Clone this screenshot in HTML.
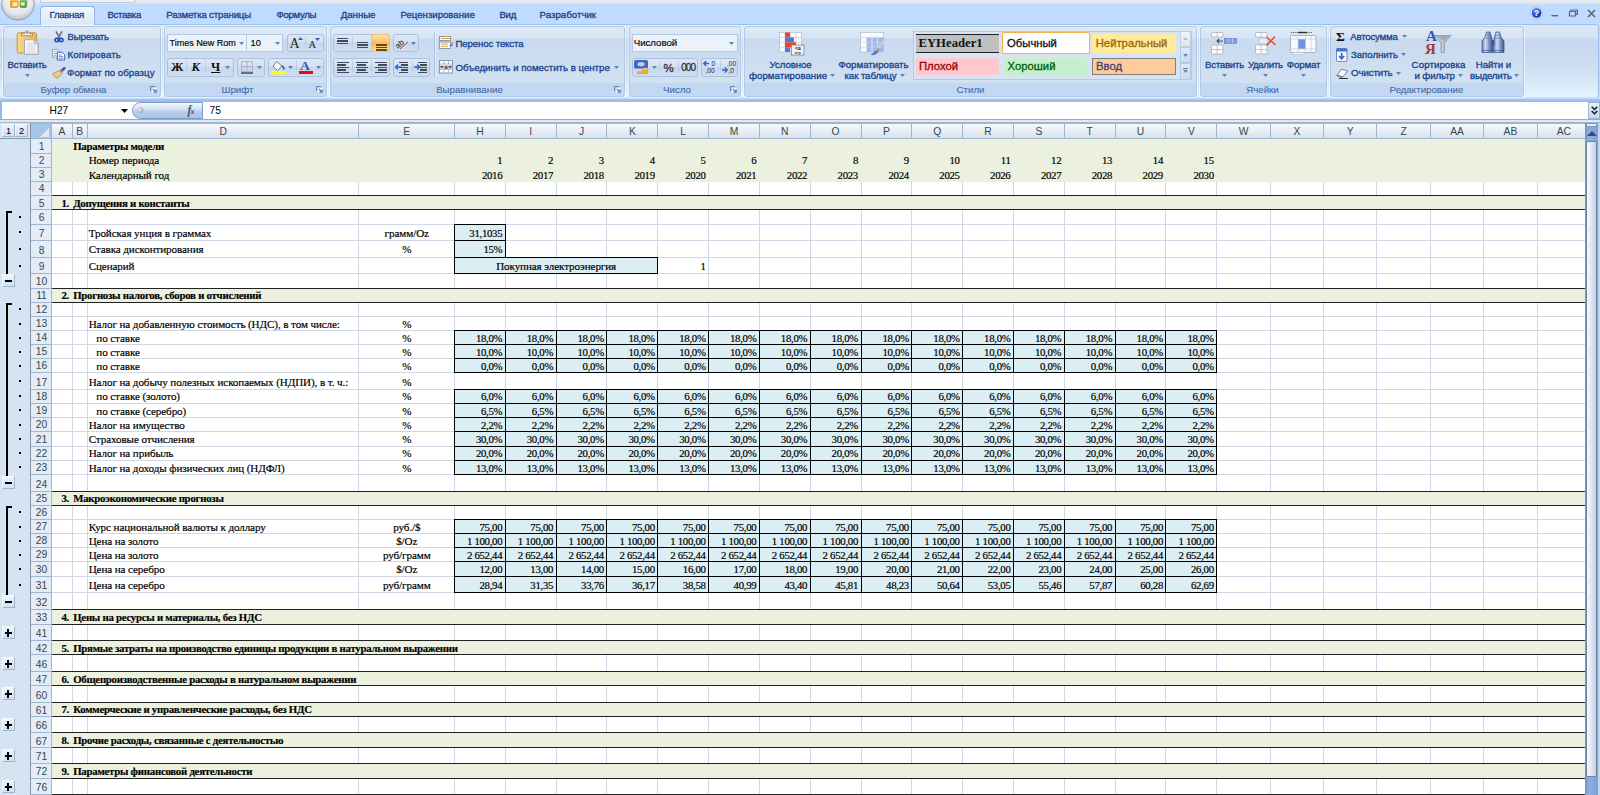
<!DOCTYPE html>
<html lang="ru"><head><meta charset="utf-8"><title>Excel</title>
<style>
html,body{margin:0;padding:0;}
body{width:1600px;height:795px;overflow:hidden;position:relative;background:#fff;font-family:"Liberation Sans",sans-serif;}
div,span{position:absolute;box-sizing:border-box;white-space:nowrap;}
svg{position:absolute;overflow:visible;}
.t{font-family:"Liberation Serif",serif;font-size:11.1px;line-height:12px;height:12px;color:#000;letter-spacing:-0.1px;-webkit-text-stroke:0.18px #000;}
.n{font-family:"Liberation Serif",serif;font-size:10.8px;line-height:12px;height:12px;color:#000;text-align:right;letter-spacing:-0.3px;-webkit-text-stroke:0.18px #000;}
.b{font-weight:bold;font-size:10.8px;letter-spacing:-0.25px;}
.c{text-align:center;}
.rh{font-size:10.3px;line-height:14px;color:#34484a;text-align:center;left:31px;width:21px;}
.ch{font-size:10.3px;line-height:14px;color:#34484a;text-align:center;top:124.5px;height:14px;}
.rt{font-size:9.7px;color:#15428b;line-height:12px;-webkit-text-stroke:0.3px currentColor;}
.gl{background:#d0d7e5;}
.inp{background:#dbeef4;border:1px solid #000;}
</style></head><body>

<div style="left:52px;top:139px;width:1533px;height:656px;background:#fff;"></div>
<div class="gl" style="left:72px;top:139px;width:1px;height:656px;"></div>
<div class="gl" style="left:87px;top:139px;width:1px;height:656px;"></div>
<div class="gl" style="left:358px;top:139px;width:1px;height:656px;"></div>
<div class="gl" style="left:454px;top:139px;width:1px;height:656px;"></div>
<div class="gl" style="left:505px;top:139px;width:1px;height:656px;"></div>
<div class="gl" style="left:556px;top:139px;width:1px;height:656px;"></div>
<div class="gl" style="left:606px;top:139px;width:1px;height:656px;"></div>
<div class="gl" style="left:657px;top:139px;width:1px;height:656px;"></div>
<div class="gl" style="left:708px;top:139px;width:1px;height:656px;"></div>
<div class="gl" style="left:759px;top:139px;width:1px;height:656px;"></div>
<div class="gl" style="left:810px;top:139px;width:1px;height:656px;"></div>
<div class="gl" style="left:861px;top:139px;width:1px;height:656px;"></div>
<div class="gl" style="left:911px;top:139px;width:1px;height:656px;"></div>
<div class="gl" style="left:962px;top:139px;width:1px;height:656px;"></div>
<div class="gl" style="left:1013px;top:139px;width:1px;height:656px;"></div>
<div class="gl" style="left:1064px;top:139px;width:1px;height:656px;"></div>
<div class="gl" style="left:1115px;top:139px;width:1px;height:656px;"></div>
<div class="gl" style="left:1165px;top:139px;width:1px;height:656px;"></div>
<div class="gl" style="left:1216px;top:139px;width:1px;height:656px;"></div>
<div class="gl" style="left:1270px;top:139px;width:1px;height:656px;"></div>
<div class="gl" style="left:1323px;top:139px;width:1px;height:656px;"></div>
<div class="gl" style="left:1376px;top:139px;width:1px;height:656px;"></div>
<div class="gl" style="left:1430px;top:139px;width:1px;height:656px;"></div>
<div class="gl" style="left:1483px;top:139px;width:1px;height:656px;"></div>
<div class="gl" style="left:1537px;top:139px;width:1px;height:656px;"></div>
<div class="gl" style="left:52px;top:153px;width:1533px;height:1px;"></div>
<div class="gl" style="left:52px;top:167px;width:1533px;height:1px;"></div>
<div class="gl" style="left:52px;top:181px;width:1533px;height:1px;"></div>
<div class="gl" style="left:52px;top:195px;width:1533px;height:1px;"></div>
<div class="gl" style="left:52px;top:209px;width:1533px;height:1px;"></div>
<div class="gl" style="left:52px;top:224px;width:1533px;height:1px;"></div>
<div class="gl" style="left:52px;top:240px;width:1533px;height:1px;"></div>
<div class="gl" style="left:52px;top:257px;width:1533px;height:1px;"></div>
<div class="gl" style="left:52px;top:273px;width:1533px;height:1px;"></div>
<div class="gl" style="left:52px;top:288px;width:1533px;height:1px;"></div>
<div class="gl" style="left:52px;top:302px;width:1533px;height:1px;"></div>
<div class="gl" style="left:52px;top:316px;width:1533px;height:1px;"></div>
<div class="gl" style="left:52px;top:330px;width:1533px;height:1px;"></div>
<div class="gl" style="left:52px;top:344px;width:1533px;height:1px;"></div>
<div class="gl" style="left:52px;top:358px;width:1533px;height:1px;"></div>
<div class="gl" style="left:52px;top:372px;width:1533px;height:1px;"></div>
<div class="gl" style="left:52px;top:389px;width:1533px;height:1px;"></div>
<div class="gl" style="left:52px;top:403px;width:1533px;height:1px;"></div>
<div class="gl" style="left:52px;top:417px;width:1533px;height:1px;"></div>
<div class="gl" style="left:52px;top:431px;width:1533px;height:1px;"></div>
<div class="gl" style="left:52px;top:446px;width:1533px;height:1px;"></div>
<div class="gl" style="left:52px;top:460px;width:1533px;height:1px;"></div>
<div class="gl" style="left:52px;top:474px;width:1533px;height:1px;"></div>
<div class="gl" style="left:52px;top:491px;width:1533px;height:1px;"></div>
<div class="gl" style="left:52px;top:505px;width:1533px;height:1px;"></div>
<div class="gl" style="left:52px;top:519px;width:1533px;height:1px;"></div>
<div class="gl" style="left:52px;top:533px;width:1533px;height:1px;"></div>
<div class="gl" style="left:52px;top:547px;width:1533px;height:1px;"></div>
<div class="gl" style="left:52px;top:561px;width:1533px;height:1px;"></div>
<div class="gl" style="left:52px;top:576px;width:1533px;height:1px;"></div>
<div class="gl" style="left:52px;top:592px;width:1533px;height:1px;"></div>
<div class="gl" style="left:52px;top:609px;width:1533px;height:1px;"></div>
<div class="gl" style="left:52px;top:624px;width:1533px;height:1px;"></div>
<div class="gl" style="left:52px;top:640px;width:1533px;height:1px;"></div>
<div class="gl" style="left:52px;top:654px;width:1533px;height:1px;"></div>
<div class="gl" style="left:52px;top:671px;width:1533px;height:1px;"></div>
<div class="gl" style="left:52px;top:685px;width:1533px;height:1px;"></div>
<div class="gl" style="left:52px;top:702px;width:1533px;height:1px;"></div>
<div class="gl" style="left:52px;top:716px;width:1533px;height:1px;"></div>
<div class="gl" style="left:52px;top:732px;width:1533px;height:1px;"></div>
<div class="gl" style="left:52px;top:747px;width:1533px;height:1px;"></div>
<div class="gl" style="left:52px;top:763px;width:1533px;height:1px;"></div>
<div class="gl" style="left:52px;top:778px;width:1533px;height:1px;"></div>
<div class="gl" style="left:52px;top:794px;width:1533px;height:1px;"></div>
<div style="left:52px;top:139px;width:1533px;height:43px;background:#ebf1de;"></div>
<div style="left:52px;top:195px;width:1533px;height:15px;background:#ebf1de;border-top:1px solid #222;border-bottom:1px solid #222;"></div>
<div style="left:52px;top:288px;width:1533px;height:15px;background:#ebf1de;border-top:1px solid #222;border-bottom:1px solid #222;"></div>
<div style="left:52px;top:491px;width:1533px;height:15px;background:#ebf1de;border-top:1px solid #222;border-bottom:1px solid #222;"></div>
<div style="left:52px;top:609px;width:1533px;height:16px;background:#ebf1de;border-top:1px solid #222;border-bottom:1px solid #222;"></div>
<div style="left:52px;top:640px;width:1533px;height:15px;background:#ebf1de;border-top:1px solid #222;border-bottom:1px solid #222;"></div>
<div style="left:52px;top:671px;width:1533px;height:15px;background:#ebf1de;border-top:1px solid #222;border-bottom:1px solid #222;"></div>
<div style="left:52px;top:702px;width:1533px;height:15px;background:#ebf1de;border-top:1px solid #222;border-bottom:1px solid #222;"></div>
<div style="left:52px;top:732px;width:1533px;height:16px;background:#ebf1de;border-top:1px solid #222;border-bottom:1px solid #222;"></div>
<div style="left:52px;top:763px;width:1533px;height:16px;background:#ebf1de;border-top:1px solid #222;border-bottom:1px solid #222;"></div>
<div style="left:52px;top:794px;width:1533px;height:1px;background:#222;"></div>
<div class="t b" style="left:73.2px;top:140.0px;">Параметры модели</div>
<div class="t" style="left:88.7px;top:154.0px;">Номер периода</div>
<div class="t" style="left:88.7px;top:168.5px;">Календарный год</div>
<div class="n" style="left:454.5px;width:47.8px;top:154.0px;text-align:right;">1</div>
<div class="n" style="left:454.5px;width:47.8px;top:168.5px;text-align:right;">2016</div>
<div class="n" style="left:505.3px;width:47.8px;top:154.0px;text-align:right;">2</div>
<div class="n" style="left:505.3px;width:47.8px;top:168.5px;text-align:right;">2017</div>
<div class="n" style="left:556.1px;width:47.8px;top:154.0px;text-align:right;">3</div>
<div class="n" style="left:556.1px;width:47.8px;top:168.5px;text-align:right;">2018</div>
<div class="n" style="left:607.0px;width:47.8px;top:154.0px;text-align:right;">4</div>
<div class="n" style="left:607.0px;width:47.8px;top:168.5px;text-align:right;">2019</div>
<div class="n" style="left:657.8px;width:47.8px;top:154.0px;text-align:right;">5</div>
<div class="n" style="left:657.8px;width:47.8px;top:168.5px;text-align:right;">2020</div>
<div class="n" style="left:708.6px;width:47.8px;top:154.0px;text-align:right;">6</div>
<div class="n" style="left:708.6px;width:47.8px;top:168.5px;text-align:right;">2021</div>
<div class="n" style="left:759.4px;width:47.8px;top:154.0px;text-align:right;">7</div>
<div class="n" style="left:759.4px;width:47.8px;top:168.5px;text-align:right;">2022</div>
<div class="n" style="left:810.2px;width:47.8px;top:154.0px;text-align:right;">8</div>
<div class="n" style="left:810.2px;width:47.8px;top:168.5px;text-align:right;">2023</div>
<div class="n" style="left:861.1px;width:47.8px;top:154.0px;text-align:right;">9</div>
<div class="n" style="left:861.1px;width:47.8px;top:168.5px;text-align:right;">2024</div>
<div class="n" style="left:911.9px;width:47.8px;top:154.0px;text-align:right;">10</div>
<div class="n" style="left:911.9px;width:47.8px;top:168.5px;text-align:right;">2025</div>
<div class="n" style="left:962.7px;width:47.8px;top:154.0px;text-align:right;">11</div>
<div class="n" style="left:962.7px;width:47.8px;top:168.5px;text-align:right;">2026</div>
<div class="n" style="left:1013.5px;width:47.8px;top:154.0px;text-align:right;">12</div>
<div class="n" style="left:1013.5px;width:47.8px;top:168.5px;text-align:right;">2027</div>
<div class="n" style="left:1064.3px;width:47.8px;top:154.0px;text-align:right;">13</div>
<div class="n" style="left:1064.3px;width:47.8px;top:168.5px;text-align:right;">2028</div>
<div class="n" style="left:1115.2px;width:47.8px;top:154.0px;text-align:right;">14</div>
<div class="n" style="left:1115.2px;width:47.8px;top:168.5px;text-align:right;">2029</div>
<div class="n" style="left:1166.0px;width:47.8px;top:154.0px;text-align:right;">15</div>
<div class="n" style="left:1166.0px;width:47.8px;top:168.5px;text-align:right;">2030</div>
<div class="t b" style="left:52.0px;width:17.0px;top:196.5px;text-align:right;">1.</div>
<div class="t b" style="left:73.2px;top:196.5px;">Допущения и константы</div>
<div class="t b" style="left:52.0px;width:17.0px;top:289.0px;text-align:right;">2.</div>
<div class="t b" style="left:73.2px;top:289.0px;">Прогнозы налогов, сборов и отчислений</div>
<div class="t b" style="left:52.0px;width:17.0px;top:492.0px;text-align:right;">3.</div>
<div class="t b" style="left:73.2px;top:492.0px;">Макроэкономические прогнозы</div>
<div class="t b" style="left:52.0px;width:17.0px;top:610.5px;text-align:right;">4.</div>
<div class="t b" style="left:73.2px;top:610.5px;">Цены на ресурсы и материалы, без НДС</div>
<div class="t b" style="left:52.0px;width:17.0px;top:641.5px;text-align:right;">5.</div>
<div class="t b" style="left:73.2px;top:641.5px;">Прямые затраты на производство единицы продукции в натуральном выражении</div>
<div class="t b" style="left:52.0px;width:17.0px;top:672.5px;text-align:right;">6.</div>
<div class="t b" style="left:73.2px;top:672.5px;">Общепроизводственные расходы в натуральном выражении</div>
<div class="t b" style="left:52.0px;width:17.0px;top:703.0px;text-align:right;">7.</div>
<div class="t b" style="left:73.2px;top:703.0px;">Коммерческие и управленческие расходы, без НДС</div>
<div class="t b" style="left:52.0px;width:17.0px;top:734.0px;text-align:right;">8.</div>
<div class="t b" style="left:73.2px;top:734.0px;">Прочие расходы, связанные с деятельностью</div>
<div class="t b" style="left:52.0px;width:17.0px;top:765.0px;text-align:right;">9.</div>
<div class="t b" style="left:73.2px;top:765.0px;">Параметры финансовой деятельности</div>
<div class="t" style="left:88.7px;top:226.5px;">Тройская унция в граммах</div>
<div class="t" style="left:359.0px;width:95.5px;top:226.5px;text-align:center;">грамм/Oz</div>
<div class="t" style="left:88.7px;top:243.0px;">Ставка дисконтирования</div>
<div class="t" style="left:359.0px;width:95.5px;top:243.0px;text-align:center;">%</div>
<div class="t" style="left:88.7px;top:259.5px;">Сценарий</div>
<div class="inp" style="left:454px;top:224px;width:52px;height:17px;"></div>
<div class="inp" style="left:454px;top:240px;width:52px;height:18px;"></div>
<div class="inp" style="left:454px;top:257px;width:204px;height:17px;"></div>
<div class="n" style="left:454.5px;width:47.8px;top:226.5px;text-align:right;">31,1035</div>
<div class="n" style="left:454.5px;width:47.8px;top:243.0px;text-align:right;">15%</div>
<div class="t" style="left:454.5px;width:203.3px;top:259.5px;text-align:center;">Покупная электроэнергия</div>
<div class="n" style="left:657.8px;width:47.8px;top:259.5px;text-align:right;">1</div>
<div class="t" style="left:88.7px;top:317.5px;">Налог на добавленную стоимость (НДС), в том числе:</div>
<div class="t" style="left:359.0px;width:95.5px;top:317.5px;text-align:center;">%</div>
<div class="t" style="left:96.3px;top:331.5px;">по ставке</div>
<div class="t" style="left:359.0px;width:95.5px;top:331.5px;text-align:center;">%</div>
<div class="inp" style="left:454px;top:330px;width:52px;height:15px;"></div>
<div class="n" style="left:454.5px;width:47.8px;top:331.5px;text-align:right;">18,0%</div>
<div class="inp" style="left:505px;top:330px;width:52px;height:15px;"></div>
<div class="n" style="left:505.3px;width:47.8px;top:331.5px;text-align:right;">18,0%</div>
<div class="inp" style="left:556px;top:330px;width:51px;height:15px;"></div>
<div class="n" style="left:556.1px;width:47.8px;top:331.5px;text-align:right;">18,0%</div>
<div class="inp" style="left:606px;top:330px;width:52px;height:15px;"></div>
<div class="n" style="left:607.0px;width:47.8px;top:331.5px;text-align:right;">18,0%</div>
<div class="inp" style="left:657px;top:330px;width:52px;height:15px;"></div>
<div class="n" style="left:657.8px;width:47.8px;top:331.5px;text-align:right;">18,0%</div>
<div class="inp" style="left:708px;top:330px;width:52px;height:15px;"></div>
<div class="n" style="left:708.6px;width:47.8px;top:331.5px;text-align:right;">18,0%</div>
<div class="inp" style="left:759px;top:330px;width:52px;height:15px;"></div>
<div class="n" style="left:759.4px;width:47.8px;top:331.5px;text-align:right;">18,0%</div>
<div class="inp" style="left:810px;top:330px;width:52px;height:15px;"></div>
<div class="n" style="left:810.2px;width:47.8px;top:331.5px;text-align:right;">18,0%</div>
<div class="inp" style="left:861px;top:330px;width:51px;height:15px;"></div>
<div class="n" style="left:861.1px;width:47.8px;top:331.5px;text-align:right;">18,0%</div>
<div class="inp" style="left:911px;top:330px;width:52px;height:15px;"></div>
<div class="n" style="left:911.9px;width:47.8px;top:331.5px;text-align:right;">18,0%</div>
<div class="inp" style="left:962px;top:330px;width:52px;height:15px;"></div>
<div class="n" style="left:962.7px;width:47.8px;top:331.5px;text-align:right;">18,0%</div>
<div class="inp" style="left:1013px;top:330px;width:52px;height:15px;"></div>
<div class="n" style="left:1013.5px;width:47.8px;top:331.5px;text-align:right;">18,0%</div>
<div class="inp" style="left:1064px;top:330px;width:52px;height:15px;"></div>
<div class="n" style="left:1064.3px;width:47.8px;top:331.5px;text-align:right;">18,0%</div>
<div class="inp" style="left:1115px;top:330px;width:51px;height:15px;"></div>
<div class="n" style="left:1115.2px;width:47.8px;top:331.5px;text-align:right;">18,0%</div>
<div class="inp" style="left:1165px;top:330px;width:52px;height:15px;"></div>
<div class="n" style="left:1166.0px;width:47.8px;top:331.5px;text-align:right;">18,0%</div>
<div class="t" style="left:96.3px;top:345.5px;">по ставке</div>
<div class="t" style="left:359.0px;width:95.5px;top:345.5px;text-align:center;">%</div>
<div class="inp" style="left:454px;top:344px;width:52px;height:15px;"></div>
<div class="n" style="left:454.5px;width:47.8px;top:345.5px;text-align:right;">10,0%</div>
<div class="inp" style="left:505px;top:344px;width:52px;height:15px;"></div>
<div class="n" style="left:505.3px;width:47.8px;top:345.5px;text-align:right;">10,0%</div>
<div class="inp" style="left:556px;top:344px;width:51px;height:15px;"></div>
<div class="n" style="left:556.1px;width:47.8px;top:345.5px;text-align:right;">10,0%</div>
<div class="inp" style="left:606px;top:344px;width:52px;height:15px;"></div>
<div class="n" style="left:607.0px;width:47.8px;top:345.5px;text-align:right;">10,0%</div>
<div class="inp" style="left:657px;top:344px;width:52px;height:15px;"></div>
<div class="n" style="left:657.8px;width:47.8px;top:345.5px;text-align:right;">10,0%</div>
<div class="inp" style="left:708px;top:344px;width:52px;height:15px;"></div>
<div class="n" style="left:708.6px;width:47.8px;top:345.5px;text-align:right;">10,0%</div>
<div class="inp" style="left:759px;top:344px;width:52px;height:15px;"></div>
<div class="n" style="left:759.4px;width:47.8px;top:345.5px;text-align:right;">10,0%</div>
<div class="inp" style="left:810px;top:344px;width:52px;height:15px;"></div>
<div class="n" style="left:810.2px;width:47.8px;top:345.5px;text-align:right;">10,0%</div>
<div class="inp" style="left:861px;top:344px;width:51px;height:15px;"></div>
<div class="n" style="left:861.1px;width:47.8px;top:345.5px;text-align:right;">10,0%</div>
<div class="inp" style="left:911px;top:344px;width:52px;height:15px;"></div>
<div class="n" style="left:911.9px;width:47.8px;top:345.5px;text-align:right;">10,0%</div>
<div class="inp" style="left:962px;top:344px;width:52px;height:15px;"></div>
<div class="n" style="left:962.7px;width:47.8px;top:345.5px;text-align:right;">10,0%</div>
<div class="inp" style="left:1013px;top:344px;width:52px;height:15px;"></div>
<div class="n" style="left:1013.5px;width:47.8px;top:345.5px;text-align:right;">10,0%</div>
<div class="inp" style="left:1064px;top:344px;width:52px;height:15px;"></div>
<div class="n" style="left:1064.3px;width:47.8px;top:345.5px;text-align:right;">10,0%</div>
<div class="inp" style="left:1115px;top:344px;width:51px;height:15px;"></div>
<div class="n" style="left:1115.2px;width:47.8px;top:345.5px;text-align:right;">10,0%</div>
<div class="inp" style="left:1165px;top:344px;width:52px;height:15px;"></div>
<div class="n" style="left:1166.0px;width:47.8px;top:345.5px;text-align:right;">10,0%</div>
<div class="t" style="left:96.3px;top:359.5px;">по ставке</div>
<div class="t" style="left:359.0px;width:95.5px;top:359.5px;text-align:center;">%</div>
<div class="inp" style="left:454px;top:358px;width:52px;height:15px;"></div>
<div class="n" style="left:454.5px;width:47.8px;top:359.5px;text-align:right;">0,0%</div>
<div class="inp" style="left:505px;top:358px;width:52px;height:15px;"></div>
<div class="n" style="left:505.3px;width:47.8px;top:359.5px;text-align:right;">0,0%</div>
<div class="inp" style="left:556px;top:358px;width:51px;height:15px;"></div>
<div class="n" style="left:556.1px;width:47.8px;top:359.5px;text-align:right;">0,0%</div>
<div class="inp" style="left:606px;top:358px;width:52px;height:15px;"></div>
<div class="n" style="left:607.0px;width:47.8px;top:359.5px;text-align:right;">0,0%</div>
<div class="inp" style="left:657px;top:358px;width:52px;height:15px;"></div>
<div class="n" style="left:657.8px;width:47.8px;top:359.5px;text-align:right;">0,0%</div>
<div class="inp" style="left:708px;top:358px;width:52px;height:15px;"></div>
<div class="n" style="left:708.6px;width:47.8px;top:359.5px;text-align:right;">0,0%</div>
<div class="inp" style="left:759px;top:358px;width:52px;height:15px;"></div>
<div class="n" style="left:759.4px;width:47.8px;top:359.5px;text-align:right;">0,0%</div>
<div class="inp" style="left:810px;top:358px;width:52px;height:15px;"></div>
<div class="n" style="left:810.2px;width:47.8px;top:359.5px;text-align:right;">0,0%</div>
<div class="inp" style="left:861px;top:358px;width:51px;height:15px;"></div>
<div class="n" style="left:861.1px;width:47.8px;top:359.5px;text-align:right;">0,0%</div>
<div class="inp" style="left:911px;top:358px;width:52px;height:15px;"></div>
<div class="n" style="left:911.9px;width:47.8px;top:359.5px;text-align:right;">0,0%</div>
<div class="inp" style="left:962px;top:358px;width:52px;height:15px;"></div>
<div class="n" style="left:962.7px;width:47.8px;top:359.5px;text-align:right;">0,0%</div>
<div class="inp" style="left:1013px;top:358px;width:52px;height:15px;"></div>
<div class="n" style="left:1013.5px;width:47.8px;top:359.5px;text-align:right;">0,0%</div>
<div class="inp" style="left:1064px;top:358px;width:52px;height:15px;"></div>
<div class="n" style="left:1064.3px;width:47.8px;top:359.5px;text-align:right;">0,0%</div>
<div class="inp" style="left:1115px;top:358px;width:51px;height:15px;"></div>
<div class="n" style="left:1115.2px;width:47.8px;top:359.5px;text-align:right;">0,0%</div>
<div class="inp" style="left:1165px;top:358px;width:52px;height:15px;"></div>
<div class="n" style="left:1166.0px;width:47.8px;top:359.5px;text-align:right;">0,0%</div>
<div class="t" style="left:88.7px;top:376.0px;">Налог на добычу полезных ископаемых (НДПИ), в т. ч.:</div>
<div class="t" style="left:359.0px;width:95.5px;top:376.0px;text-align:center;">%</div>
<div class="t" style="left:96.3px;top:390.0px;">по ставке (золото)</div>
<div class="t" style="left:359.0px;width:95.5px;top:390.0px;text-align:center;">%</div>
<div class="inp" style="left:454px;top:389px;width:52px;height:15px;"></div>
<div class="n" style="left:454.5px;width:47.8px;top:390.0px;text-align:right;">6,0%</div>
<div class="inp" style="left:505px;top:389px;width:52px;height:15px;"></div>
<div class="n" style="left:505.3px;width:47.8px;top:390.0px;text-align:right;">6,0%</div>
<div class="inp" style="left:556px;top:389px;width:51px;height:15px;"></div>
<div class="n" style="left:556.1px;width:47.8px;top:390.0px;text-align:right;">6,0%</div>
<div class="inp" style="left:606px;top:389px;width:52px;height:15px;"></div>
<div class="n" style="left:607.0px;width:47.8px;top:390.0px;text-align:right;">6,0%</div>
<div class="inp" style="left:657px;top:389px;width:52px;height:15px;"></div>
<div class="n" style="left:657.8px;width:47.8px;top:390.0px;text-align:right;">6,0%</div>
<div class="inp" style="left:708px;top:389px;width:52px;height:15px;"></div>
<div class="n" style="left:708.6px;width:47.8px;top:390.0px;text-align:right;">6,0%</div>
<div class="inp" style="left:759px;top:389px;width:52px;height:15px;"></div>
<div class="n" style="left:759.4px;width:47.8px;top:390.0px;text-align:right;">6,0%</div>
<div class="inp" style="left:810px;top:389px;width:52px;height:15px;"></div>
<div class="n" style="left:810.2px;width:47.8px;top:390.0px;text-align:right;">6,0%</div>
<div class="inp" style="left:861px;top:389px;width:51px;height:15px;"></div>
<div class="n" style="left:861.1px;width:47.8px;top:390.0px;text-align:right;">6,0%</div>
<div class="inp" style="left:911px;top:389px;width:52px;height:15px;"></div>
<div class="n" style="left:911.9px;width:47.8px;top:390.0px;text-align:right;">6,0%</div>
<div class="inp" style="left:962px;top:389px;width:52px;height:15px;"></div>
<div class="n" style="left:962.7px;width:47.8px;top:390.0px;text-align:right;">6,0%</div>
<div class="inp" style="left:1013px;top:389px;width:52px;height:15px;"></div>
<div class="n" style="left:1013.5px;width:47.8px;top:390.0px;text-align:right;">6,0%</div>
<div class="inp" style="left:1064px;top:389px;width:52px;height:15px;"></div>
<div class="n" style="left:1064.3px;width:47.8px;top:390.0px;text-align:right;">6,0%</div>
<div class="inp" style="left:1115px;top:389px;width:51px;height:15px;"></div>
<div class="n" style="left:1115.2px;width:47.8px;top:390.0px;text-align:right;">6,0%</div>
<div class="inp" style="left:1165px;top:389px;width:52px;height:15px;"></div>
<div class="n" style="left:1166.0px;width:47.8px;top:390.0px;text-align:right;">6,0%</div>
<div class="t" style="left:96.3px;top:404.5px;">по ставке (серебро)</div>
<div class="t" style="left:359.0px;width:95.5px;top:404.5px;text-align:center;">%</div>
<div class="inp" style="left:454px;top:403px;width:52px;height:15px;"></div>
<div class="n" style="left:454.5px;width:47.8px;top:404.5px;text-align:right;">6,5%</div>
<div class="inp" style="left:505px;top:403px;width:52px;height:15px;"></div>
<div class="n" style="left:505.3px;width:47.8px;top:404.5px;text-align:right;">6,5%</div>
<div class="inp" style="left:556px;top:403px;width:51px;height:15px;"></div>
<div class="n" style="left:556.1px;width:47.8px;top:404.5px;text-align:right;">6,5%</div>
<div class="inp" style="left:606px;top:403px;width:52px;height:15px;"></div>
<div class="n" style="left:607.0px;width:47.8px;top:404.5px;text-align:right;">6,5%</div>
<div class="inp" style="left:657px;top:403px;width:52px;height:15px;"></div>
<div class="n" style="left:657.8px;width:47.8px;top:404.5px;text-align:right;">6,5%</div>
<div class="inp" style="left:708px;top:403px;width:52px;height:15px;"></div>
<div class="n" style="left:708.6px;width:47.8px;top:404.5px;text-align:right;">6,5%</div>
<div class="inp" style="left:759px;top:403px;width:52px;height:15px;"></div>
<div class="n" style="left:759.4px;width:47.8px;top:404.5px;text-align:right;">6,5%</div>
<div class="inp" style="left:810px;top:403px;width:52px;height:15px;"></div>
<div class="n" style="left:810.2px;width:47.8px;top:404.5px;text-align:right;">6,5%</div>
<div class="inp" style="left:861px;top:403px;width:51px;height:15px;"></div>
<div class="n" style="left:861.1px;width:47.8px;top:404.5px;text-align:right;">6,5%</div>
<div class="inp" style="left:911px;top:403px;width:52px;height:15px;"></div>
<div class="n" style="left:911.9px;width:47.8px;top:404.5px;text-align:right;">6,5%</div>
<div class="inp" style="left:962px;top:403px;width:52px;height:15px;"></div>
<div class="n" style="left:962.7px;width:47.8px;top:404.5px;text-align:right;">6,5%</div>
<div class="inp" style="left:1013px;top:403px;width:52px;height:15px;"></div>
<div class="n" style="left:1013.5px;width:47.8px;top:404.5px;text-align:right;">6,5%</div>
<div class="inp" style="left:1064px;top:403px;width:52px;height:15px;"></div>
<div class="n" style="left:1064.3px;width:47.8px;top:404.5px;text-align:right;">6,5%</div>
<div class="inp" style="left:1115px;top:403px;width:51px;height:15px;"></div>
<div class="n" style="left:1115.2px;width:47.8px;top:404.5px;text-align:right;">6,5%</div>
<div class="inp" style="left:1165px;top:403px;width:52px;height:15px;"></div>
<div class="n" style="left:1166.0px;width:47.8px;top:404.5px;text-align:right;">6,5%</div>
<div class="t" style="left:88.7px;top:418.5px;">Налог на имущество</div>
<div class="t" style="left:359.0px;width:95.5px;top:418.5px;text-align:center;">%</div>
<div class="inp" style="left:454px;top:417px;width:52px;height:15px;"></div>
<div class="n" style="left:454.5px;width:47.8px;top:418.5px;text-align:right;">2,2%</div>
<div class="inp" style="left:505px;top:417px;width:52px;height:15px;"></div>
<div class="n" style="left:505.3px;width:47.8px;top:418.5px;text-align:right;">2,2%</div>
<div class="inp" style="left:556px;top:417px;width:51px;height:15px;"></div>
<div class="n" style="left:556.1px;width:47.8px;top:418.5px;text-align:right;">2,2%</div>
<div class="inp" style="left:606px;top:417px;width:52px;height:15px;"></div>
<div class="n" style="left:607.0px;width:47.8px;top:418.5px;text-align:right;">2,2%</div>
<div class="inp" style="left:657px;top:417px;width:52px;height:15px;"></div>
<div class="n" style="left:657.8px;width:47.8px;top:418.5px;text-align:right;">2,2%</div>
<div class="inp" style="left:708px;top:417px;width:52px;height:15px;"></div>
<div class="n" style="left:708.6px;width:47.8px;top:418.5px;text-align:right;">2,2%</div>
<div class="inp" style="left:759px;top:417px;width:52px;height:15px;"></div>
<div class="n" style="left:759.4px;width:47.8px;top:418.5px;text-align:right;">2,2%</div>
<div class="inp" style="left:810px;top:417px;width:52px;height:15px;"></div>
<div class="n" style="left:810.2px;width:47.8px;top:418.5px;text-align:right;">2,2%</div>
<div class="inp" style="left:861px;top:417px;width:51px;height:15px;"></div>
<div class="n" style="left:861.1px;width:47.8px;top:418.5px;text-align:right;">2,2%</div>
<div class="inp" style="left:911px;top:417px;width:52px;height:15px;"></div>
<div class="n" style="left:911.9px;width:47.8px;top:418.5px;text-align:right;">2,2%</div>
<div class="inp" style="left:962px;top:417px;width:52px;height:15px;"></div>
<div class="n" style="left:962.7px;width:47.8px;top:418.5px;text-align:right;">2,2%</div>
<div class="inp" style="left:1013px;top:417px;width:52px;height:15px;"></div>
<div class="n" style="left:1013.5px;width:47.8px;top:418.5px;text-align:right;">2,2%</div>
<div class="inp" style="left:1064px;top:417px;width:52px;height:15px;"></div>
<div class="n" style="left:1064.3px;width:47.8px;top:418.5px;text-align:right;">2,2%</div>
<div class="inp" style="left:1115px;top:417px;width:51px;height:15px;"></div>
<div class="n" style="left:1115.2px;width:47.8px;top:418.5px;text-align:right;">2,2%</div>
<div class="inp" style="left:1165px;top:417px;width:52px;height:15px;"></div>
<div class="n" style="left:1166.0px;width:47.8px;top:418.5px;text-align:right;">2,2%</div>
<div class="t" style="left:88.7px;top:433.0px;">Страховые отчисления</div>
<div class="t" style="left:359.0px;width:95.5px;top:433.0px;text-align:center;">%</div>
<div class="inp" style="left:454px;top:431px;width:52px;height:16px;"></div>
<div class="n" style="left:454.5px;width:47.8px;top:433.0px;text-align:right;">30,0%</div>
<div class="inp" style="left:505px;top:431px;width:52px;height:16px;"></div>
<div class="n" style="left:505.3px;width:47.8px;top:433.0px;text-align:right;">30,0%</div>
<div class="inp" style="left:556px;top:431px;width:51px;height:16px;"></div>
<div class="n" style="left:556.1px;width:47.8px;top:433.0px;text-align:right;">30,0%</div>
<div class="inp" style="left:606px;top:431px;width:52px;height:16px;"></div>
<div class="n" style="left:607.0px;width:47.8px;top:433.0px;text-align:right;">30,0%</div>
<div class="inp" style="left:657px;top:431px;width:52px;height:16px;"></div>
<div class="n" style="left:657.8px;width:47.8px;top:433.0px;text-align:right;">30,0%</div>
<div class="inp" style="left:708px;top:431px;width:52px;height:16px;"></div>
<div class="n" style="left:708.6px;width:47.8px;top:433.0px;text-align:right;">30,0%</div>
<div class="inp" style="left:759px;top:431px;width:52px;height:16px;"></div>
<div class="n" style="left:759.4px;width:47.8px;top:433.0px;text-align:right;">30,0%</div>
<div class="inp" style="left:810px;top:431px;width:52px;height:16px;"></div>
<div class="n" style="left:810.2px;width:47.8px;top:433.0px;text-align:right;">30,0%</div>
<div class="inp" style="left:861px;top:431px;width:51px;height:16px;"></div>
<div class="n" style="left:861.1px;width:47.8px;top:433.0px;text-align:right;">30,0%</div>
<div class="inp" style="left:911px;top:431px;width:52px;height:16px;"></div>
<div class="n" style="left:911.9px;width:47.8px;top:433.0px;text-align:right;">30,0%</div>
<div class="inp" style="left:962px;top:431px;width:52px;height:16px;"></div>
<div class="n" style="left:962.7px;width:47.8px;top:433.0px;text-align:right;">30,0%</div>
<div class="inp" style="left:1013px;top:431px;width:52px;height:16px;"></div>
<div class="n" style="left:1013.5px;width:47.8px;top:433.0px;text-align:right;">30,0%</div>
<div class="inp" style="left:1064px;top:431px;width:52px;height:16px;"></div>
<div class="n" style="left:1064.3px;width:47.8px;top:433.0px;text-align:right;">30,0%</div>
<div class="inp" style="left:1115px;top:431px;width:51px;height:16px;"></div>
<div class="n" style="left:1115.2px;width:47.8px;top:433.0px;text-align:right;">30,0%</div>
<div class="inp" style="left:1165px;top:431px;width:52px;height:16px;"></div>
<div class="n" style="left:1166.0px;width:47.8px;top:433.0px;text-align:right;">30,0%</div>
<div class="t" style="left:88.7px;top:447.0px;">Налог на прибыль</div>
<div class="t" style="left:359.0px;width:95.5px;top:447.0px;text-align:center;">%</div>
<div class="inp" style="left:454px;top:446px;width:52px;height:15px;"></div>
<div class="n" style="left:454.5px;width:47.8px;top:447.0px;text-align:right;">20,0%</div>
<div class="inp" style="left:505px;top:446px;width:52px;height:15px;"></div>
<div class="n" style="left:505.3px;width:47.8px;top:447.0px;text-align:right;">20,0%</div>
<div class="inp" style="left:556px;top:446px;width:51px;height:15px;"></div>
<div class="n" style="left:556.1px;width:47.8px;top:447.0px;text-align:right;">20,0%</div>
<div class="inp" style="left:606px;top:446px;width:52px;height:15px;"></div>
<div class="n" style="left:607.0px;width:47.8px;top:447.0px;text-align:right;">20,0%</div>
<div class="inp" style="left:657px;top:446px;width:52px;height:15px;"></div>
<div class="n" style="left:657.8px;width:47.8px;top:447.0px;text-align:right;">20,0%</div>
<div class="inp" style="left:708px;top:446px;width:52px;height:15px;"></div>
<div class="n" style="left:708.6px;width:47.8px;top:447.0px;text-align:right;">20,0%</div>
<div class="inp" style="left:759px;top:446px;width:52px;height:15px;"></div>
<div class="n" style="left:759.4px;width:47.8px;top:447.0px;text-align:right;">20,0%</div>
<div class="inp" style="left:810px;top:446px;width:52px;height:15px;"></div>
<div class="n" style="left:810.2px;width:47.8px;top:447.0px;text-align:right;">20,0%</div>
<div class="inp" style="left:861px;top:446px;width:51px;height:15px;"></div>
<div class="n" style="left:861.1px;width:47.8px;top:447.0px;text-align:right;">20,0%</div>
<div class="inp" style="left:911px;top:446px;width:52px;height:15px;"></div>
<div class="n" style="left:911.9px;width:47.8px;top:447.0px;text-align:right;">20,0%</div>
<div class="inp" style="left:962px;top:446px;width:52px;height:15px;"></div>
<div class="n" style="left:962.7px;width:47.8px;top:447.0px;text-align:right;">20,0%</div>
<div class="inp" style="left:1013px;top:446px;width:52px;height:15px;"></div>
<div class="n" style="left:1013.5px;width:47.8px;top:447.0px;text-align:right;">20,0%</div>
<div class="inp" style="left:1064px;top:446px;width:52px;height:15px;"></div>
<div class="n" style="left:1064.3px;width:47.8px;top:447.0px;text-align:right;">20,0%</div>
<div class="inp" style="left:1115px;top:446px;width:51px;height:15px;"></div>
<div class="n" style="left:1115.2px;width:47.8px;top:447.0px;text-align:right;">20,0%</div>
<div class="inp" style="left:1165px;top:446px;width:52px;height:15px;"></div>
<div class="n" style="left:1166.0px;width:47.8px;top:447.0px;text-align:right;">20,0%</div>
<div class="t" style="left:88.7px;top:461.5px;">Налог на доходы физических лиц (НДФЛ)</div>
<div class="t" style="left:359.0px;width:95.5px;top:461.5px;text-align:center;">%</div>
<div class="inp" style="left:454px;top:460px;width:52px;height:15px;"></div>
<div class="n" style="left:454.5px;width:47.8px;top:461.5px;text-align:right;">13,0%</div>
<div class="inp" style="left:505px;top:460px;width:52px;height:15px;"></div>
<div class="n" style="left:505.3px;width:47.8px;top:461.5px;text-align:right;">13,0%</div>
<div class="inp" style="left:556px;top:460px;width:51px;height:15px;"></div>
<div class="n" style="left:556.1px;width:47.8px;top:461.5px;text-align:right;">13,0%</div>
<div class="inp" style="left:606px;top:460px;width:52px;height:15px;"></div>
<div class="n" style="left:607.0px;width:47.8px;top:461.5px;text-align:right;">13,0%</div>
<div class="inp" style="left:657px;top:460px;width:52px;height:15px;"></div>
<div class="n" style="left:657.8px;width:47.8px;top:461.5px;text-align:right;">13,0%</div>
<div class="inp" style="left:708px;top:460px;width:52px;height:15px;"></div>
<div class="n" style="left:708.6px;width:47.8px;top:461.5px;text-align:right;">13,0%</div>
<div class="inp" style="left:759px;top:460px;width:52px;height:15px;"></div>
<div class="n" style="left:759.4px;width:47.8px;top:461.5px;text-align:right;">13,0%</div>
<div class="inp" style="left:810px;top:460px;width:52px;height:15px;"></div>
<div class="n" style="left:810.2px;width:47.8px;top:461.5px;text-align:right;">13,0%</div>
<div class="inp" style="left:861px;top:460px;width:51px;height:15px;"></div>
<div class="n" style="left:861.1px;width:47.8px;top:461.5px;text-align:right;">13,0%</div>
<div class="inp" style="left:911px;top:460px;width:52px;height:15px;"></div>
<div class="n" style="left:911.9px;width:47.8px;top:461.5px;text-align:right;">13,0%</div>
<div class="inp" style="left:962px;top:460px;width:52px;height:15px;"></div>
<div class="n" style="left:962.7px;width:47.8px;top:461.5px;text-align:right;">13,0%</div>
<div class="inp" style="left:1013px;top:460px;width:52px;height:15px;"></div>
<div class="n" style="left:1013.5px;width:47.8px;top:461.5px;text-align:right;">13,0%</div>
<div class="inp" style="left:1064px;top:460px;width:52px;height:15px;"></div>
<div class="n" style="left:1064.3px;width:47.8px;top:461.5px;text-align:right;">13,0%</div>
<div class="inp" style="left:1115px;top:460px;width:51px;height:15px;"></div>
<div class="n" style="left:1115.2px;width:47.8px;top:461.5px;text-align:right;">13,0%</div>
<div class="inp" style="left:1165px;top:460px;width:52px;height:15px;"></div>
<div class="n" style="left:1166.0px;width:47.8px;top:461.5px;text-align:right;">13,0%</div>
<div class="t" style="left:88.7px;top:520.5px;">Курс национальной валюты к доллару</div>
<div class="t" style="left:359.0px;width:95.5px;top:520.5px;text-align:center;">руб./$</div>
<div class="inp" style="left:454px;top:519px;width:52px;height:15px;"></div>
<div class="n" style="left:454.5px;width:47.8px;top:520.5px;text-align:right;">75,00</div>
<div class="inp" style="left:505px;top:519px;width:52px;height:15px;"></div>
<div class="n" style="left:505.3px;width:47.8px;top:520.5px;text-align:right;">75,00</div>
<div class="inp" style="left:556px;top:519px;width:51px;height:15px;"></div>
<div class="n" style="left:556.1px;width:47.8px;top:520.5px;text-align:right;">75,00</div>
<div class="inp" style="left:606px;top:519px;width:52px;height:15px;"></div>
<div class="n" style="left:607.0px;width:47.8px;top:520.5px;text-align:right;">75,00</div>
<div class="inp" style="left:657px;top:519px;width:52px;height:15px;"></div>
<div class="n" style="left:657.8px;width:47.8px;top:520.5px;text-align:right;">75,00</div>
<div class="inp" style="left:708px;top:519px;width:52px;height:15px;"></div>
<div class="n" style="left:708.6px;width:47.8px;top:520.5px;text-align:right;">75,00</div>
<div class="inp" style="left:759px;top:519px;width:52px;height:15px;"></div>
<div class="n" style="left:759.4px;width:47.8px;top:520.5px;text-align:right;">75,00</div>
<div class="inp" style="left:810px;top:519px;width:52px;height:15px;"></div>
<div class="n" style="left:810.2px;width:47.8px;top:520.5px;text-align:right;">75,00</div>
<div class="inp" style="left:861px;top:519px;width:51px;height:15px;"></div>
<div class="n" style="left:861.1px;width:47.8px;top:520.5px;text-align:right;">75,00</div>
<div class="inp" style="left:911px;top:519px;width:52px;height:15px;"></div>
<div class="n" style="left:911.9px;width:47.8px;top:520.5px;text-align:right;">75,00</div>
<div class="inp" style="left:962px;top:519px;width:52px;height:15px;"></div>
<div class="n" style="left:962.7px;width:47.8px;top:520.5px;text-align:right;">75,00</div>
<div class="inp" style="left:1013px;top:519px;width:52px;height:15px;"></div>
<div class="n" style="left:1013.5px;width:47.8px;top:520.5px;text-align:right;">75,00</div>
<div class="inp" style="left:1064px;top:519px;width:52px;height:15px;"></div>
<div class="n" style="left:1064.3px;width:47.8px;top:520.5px;text-align:right;">75,00</div>
<div class="inp" style="left:1115px;top:519px;width:51px;height:15px;"></div>
<div class="n" style="left:1115.2px;width:47.8px;top:520.5px;text-align:right;">75,00</div>
<div class="inp" style="left:1165px;top:519px;width:52px;height:15px;"></div>
<div class="n" style="left:1166.0px;width:47.8px;top:520.5px;text-align:right;">75,00</div>
<div class="t" style="left:88.7px;top:534.5px;">Цена на золото</div>
<div class="t" style="left:359.0px;width:95.5px;top:534.5px;text-align:center;">$/Oz</div>
<div class="inp" style="left:454px;top:533px;width:52px;height:15px;"></div>
<div class="n" style="left:454.5px;width:47.8px;top:534.5px;text-align:right;">1&nbsp;100,00</div>
<div class="inp" style="left:505px;top:533px;width:52px;height:15px;"></div>
<div class="n" style="left:505.3px;width:47.8px;top:534.5px;text-align:right;">1&nbsp;100,00</div>
<div class="inp" style="left:556px;top:533px;width:51px;height:15px;"></div>
<div class="n" style="left:556.1px;width:47.8px;top:534.5px;text-align:right;">1&nbsp;100,00</div>
<div class="inp" style="left:606px;top:533px;width:52px;height:15px;"></div>
<div class="n" style="left:607.0px;width:47.8px;top:534.5px;text-align:right;">1&nbsp;100,00</div>
<div class="inp" style="left:657px;top:533px;width:52px;height:15px;"></div>
<div class="n" style="left:657.8px;width:47.8px;top:534.5px;text-align:right;">1&nbsp;100,00</div>
<div class="inp" style="left:708px;top:533px;width:52px;height:15px;"></div>
<div class="n" style="left:708.6px;width:47.8px;top:534.5px;text-align:right;">1&nbsp;100,00</div>
<div class="inp" style="left:759px;top:533px;width:52px;height:15px;"></div>
<div class="n" style="left:759.4px;width:47.8px;top:534.5px;text-align:right;">1&nbsp;100,00</div>
<div class="inp" style="left:810px;top:533px;width:52px;height:15px;"></div>
<div class="n" style="left:810.2px;width:47.8px;top:534.5px;text-align:right;">1&nbsp;100,00</div>
<div class="inp" style="left:861px;top:533px;width:51px;height:15px;"></div>
<div class="n" style="left:861.1px;width:47.8px;top:534.5px;text-align:right;">1&nbsp;100,00</div>
<div class="inp" style="left:911px;top:533px;width:52px;height:15px;"></div>
<div class="n" style="left:911.9px;width:47.8px;top:534.5px;text-align:right;">1&nbsp;100,00</div>
<div class="inp" style="left:962px;top:533px;width:52px;height:15px;"></div>
<div class="n" style="left:962.7px;width:47.8px;top:534.5px;text-align:right;">1&nbsp;100,00</div>
<div class="inp" style="left:1013px;top:533px;width:52px;height:15px;"></div>
<div class="n" style="left:1013.5px;width:47.8px;top:534.5px;text-align:right;">1&nbsp;100,00</div>
<div class="inp" style="left:1064px;top:533px;width:52px;height:15px;"></div>
<div class="n" style="left:1064.3px;width:47.8px;top:534.5px;text-align:right;">1&nbsp;100,00</div>
<div class="inp" style="left:1115px;top:533px;width:51px;height:15px;"></div>
<div class="n" style="left:1115.2px;width:47.8px;top:534.5px;text-align:right;">1&nbsp;100,00</div>
<div class="inp" style="left:1165px;top:533px;width:52px;height:15px;"></div>
<div class="n" style="left:1166.0px;width:47.8px;top:534.5px;text-align:right;">1&nbsp;100,00</div>
<div class="t" style="left:88.7px;top:548.5px;">Цена на золото</div>
<div class="t" style="left:359.0px;width:95.5px;top:548.5px;text-align:center;">руб/грамм</div>
<div class="inp" style="left:454px;top:547px;width:52px;height:15px;"></div>
<div class="n" style="left:454.5px;width:47.8px;top:548.5px;text-align:right;">2&nbsp;652,44</div>
<div class="inp" style="left:505px;top:547px;width:52px;height:15px;"></div>
<div class="n" style="left:505.3px;width:47.8px;top:548.5px;text-align:right;">2&nbsp;652,44</div>
<div class="inp" style="left:556px;top:547px;width:51px;height:15px;"></div>
<div class="n" style="left:556.1px;width:47.8px;top:548.5px;text-align:right;">2&nbsp;652,44</div>
<div class="inp" style="left:606px;top:547px;width:52px;height:15px;"></div>
<div class="n" style="left:607.0px;width:47.8px;top:548.5px;text-align:right;">2&nbsp;652,44</div>
<div class="inp" style="left:657px;top:547px;width:52px;height:15px;"></div>
<div class="n" style="left:657.8px;width:47.8px;top:548.5px;text-align:right;">2&nbsp;652,44</div>
<div class="inp" style="left:708px;top:547px;width:52px;height:15px;"></div>
<div class="n" style="left:708.6px;width:47.8px;top:548.5px;text-align:right;">2&nbsp;652,44</div>
<div class="inp" style="left:759px;top:547px;width:52px;height:15px;"></div>
<div class="n" style="left:759.4px;width:47.8px;top:548.5px;text-align:right;">2&nbsp;652,44</div>
<div class="inp" style="left:810px;top:547px;width:52px;height:15px;"></div>
<div class="n" style="left:810.2px;width:47.8px;top:548.5px;text-align:right;">2&nbsp;652,44</div>
<div class="inp" style="left:861px;top:547px;width:51px;height:15px;"></div>
<div class="n" style="left:861.1px;width:47.8px;top:548.5px;text-align:right;">2&nbsp;652,44</div>
<div class="inp" style="left:911px;top:547px;width:52px;height:15px;"></div>
<div class="n" style="left:911.9px;width:47.8px;top:548.5px;text-align:right;">2&nbsp;652,44</div>
<div class="inp" style="left:962px;top:547px;width:52px;height:15px;"></div>
<div class="n" style="left:962.7px;width:47.8px;top:548.5px;text-align:right;">2&nbsp;652,44</div>
<div class="inp" style="left:1013px;top:547px;width:52px;height:15px;"></div>
<div class="n" style="left:1013.5px;width:47.8px;top:548.5px;text-align:right;">2&nbsp;652,44</div>
<div class="inp" style="left:1064px;top:547px;width:52px;height:15px;"></div>
<div class="n" style="left:1064.3px;width:47.8px;top:548.5px;text-align:right;">2&nbsp;652,44</div>
<div class="inp" style="left:1115px;top:547px;width:51px;height:15px;"></div>
<div class="n" style="left:1115.2px;width:47.8px;top:548.5px;text-align:right;">2&nbsp;652,44</div>
<div class="inp" style="left:1165px;top:547px;width:52px;height:15px;"></div>
<div class="n" style="left:1166.0px;width:47.8px;top:548.5px;text-align:right;">2&nbsp;652,44</div>
<div class="t" style="left:88.7px;top:563.0px;">Цена на серебро</div>
<div class="t" style="left:359.0px;width:95.5px;top:563.0px;text-align:center;">$/Oz</div>
<div class="inp" style="left:454px;top:561px;width:52px;height:16px;"></div>
<div class="n" style="left:454.5px;width:47.8px;top:563.0px;text-align:right;">12,00</div>
<div class="inp" style="left:505px;top:561px;width:52px;height:16px;"></div>
<div class="n" style="left:505.3px;width:47.8px;top:563.0px;text-align:right;">13,00</div>
<div class="inp" style="left:556px;top:561px;width:51px;height:16px;"></div>
<div class="n" style="left:556.1px;width:47.8px;top:563.0px;text-align:right;">14,00</div>
<div class="inp" style="left:606px;top:561px;width:52px;height:16px;"></div>
<div class="n" style="left:607.0px;width:47.8px;top:563.0px;text-align:right;">15,00</div>
<div class="inp" style="left:657px;top:561px;width:52px;height:16px;"></div>
<div class="n" style="left:657.8px;width:47.8px;top:563.0px;text-align:right;">16,00</div>
<div class="inp" style="left:708px;top:561px;width:52px;height:16px;"></div>
<div class="n" style="left:708.6px;width:47.8px;top:563.0px;text-align:right;">17,00</div>
<div class="inp" style="left:759px;top:561px;width:52px;height:16px;"></div>
<div class="n" style="left:759.4px;width:47.8px;top:563.0px;text-align:right;">18,00</div>
<div class="inp" style="left:810px;top:561px;width:52px;height:16px;"></div>
<div class="n" style="left:810.2px;width:47.8px;top:563.0px;text-align:right;">19,00</div>
<div class="inp" style="left:861px;top:561px;width:51px;height:16px;"></div>
<div class="n" style="left:861.1px;width:47.8px;top:563.0px;text-align:right;">20,00</div>
<div class="inp" style="left:911px;top:561px;width:52px;height:16px;"></div>
<div class="n" style="left:911.9px;width:47.8px;top:563.0px;text-align:right;">21,00</div>
<div class="inp" style="left:962px;top:561px;width:52px;height:16px;"></div>
<div class="n" style="left:962.7px;width:47.8px;top:563.0px;text-align:right;">22,00</div>
<div class="inp" style="left:1013px;top:561px;width:52px;height:16px;"></div>
<div class="n" style="left:1013.5px;width:47.8px;top:563.0px;text-align:right;">23,00</div>
<div class="inp" style="left:1064px;top:561px;width:52px;height:16px;"></div>
<div class="n" style="left:1064.3px;width:47.8px;top:563.0px;text-align:right;">24,00</div>
<div class="inp" style="left:1115px;top:561px;width:51px;height:16px;"></div>
<div class="n" style="left:1115.2px;width:47.8px;top:563.0px;text-align:right;">25,00</div>
<div class="inp" style="left:1165px;top:561px;width:52px;height:16px;"></div>
<div class="n" style="left:1166.0px;width:47.8px;top:563.0px;text-align:right;">26,00</div>
<div class="t" style="left:88.7px;top:579.0px;">Цена на серебро</div>
<div class="t" style="left:359.0px;width:95.5px;top:579.0px;text-align:center;">руб/грамм</div>
<div class="inp" style="left:454px;top:576px;width:52px;height:17px;"></div>
<div class="n" style="left:454.5px;width:47.8px;top:579.0px;text-align:right;">28,94</div>
<div class="inp" style="left:505px;top:576px;width:52px;height:17px;"></div>
<div class="n" style="left:505.3px;width:47.8px;top:579.0px;text-align:right;">31,35</div>
<div class="inp" style="left:556px;top:576px;width:51px;height:17px;"></div>
<div class="n" style="left:556.1px;width:47.8px;top:579.0px;text-align:right;">33,76</div>
<div class="inp" style="left:606px;top:576px;width:52px;height:17px;"></div>
<div class="n" style="left:607.0px;width:47.8px;top:579.0px;text-align:right;">36,17</div>
<div class="inp" style="left:657px;top:576px;width:52px;height:17px;"></div>
<div class="n" style="left:657.8px;width:47.8px;top:579.0px;text-align:right;">38,58</div>
<div class="inp" style="left:708px;top:576px;width:52px;height:17px;"></div>
<div class="n" style="left:708.6px;width:47.8px;top:579.0px;text-align:right;">40,99</div>
<div class="inp" style="left:759px;top:576px;width:52px;height:17px;"></div>
<div class="n" style="left:759.4px;width:47.8px;top:579.0px;text-align:right;">43,40</div>
<div class="inp" style="left:810px;top:576px;width:52px;height:17px;"></div>
<div class="n" style="left:810.2px;width:47.8px;top:579.0px;text-align:right;">45,81</div>
<div class="inp" style="left:861px;top:576px;width:51px;height:17px;"></div>
<div class="n" style="left:861.1px;width:47.8px;top:579.0px;text-align:right;">48,23</div>
<div class="inp" style="left:911px;top:576px;width:52px;height:17px;"></div>
<div class="n" style="left:911.9px;width:47.8px;top:579.0px;text-align:right;">50,64</div>
<div class="inp" style="left:962px;top:576px;width:52px;height:17px;"></div>
<div class="n" style="left:962.7px;width:47.8px;top:579.0px;text-align:right;">53,05</div>
<div class="inp" style="left:1013px;top:576px;width:52px;height:17px;"></div>
<div class="n" style="left:1013.5px;width:47.8px;top:579.0px;text-align:right;">55,46</div>
<div class="inp" style="left:1064px;top:576px;width:52px;height:17px;"></div>
<div class="n" style="left:1064.3px;width:47.8px;top:579.0px;text-align:right;">57,87</div>
<div class="inp" style="left:1115px;top:576px;width:51px;height:17px;"></div>
<div class="n" style="left:1115.2px;width:47.8px;top:579.0px;text-align:right;">60,28</div>
<div class="inp" style="left:1165px;top:576px;width:52px;height:17px;"></div>
<div class="n" style="left:1166.0px;width:47.8px;top:579.0px;text-align:right;">62,69</div>
<div style="left:31px;top:123px;width:1554px;height:16px;background:linear-gradient(#f6f8fb 0%,#e9eef5 50%,#d9e0ec 100%);border-top:1px solid #9eb6ce;border-bottom:1px solid #9eb6ce;"></div>
<div style="left:31px;top:123px;width:21px;height:16px;background:#a9c4e9;border:1px solid #9eb6ce;border-left:none;"></div>
<svg style="left:40px;top:127.5px" width="9" height="9"><polygon points="9,0 9,9 0,9" fill="#e6e8ec"/></svg>
<div style="left:72px;top:124px;width:1px;height:14px;background:#9eb6ce;"></div>
<div class="ch" style="left:52.0px;width:20.0px;">A</div>
<div style="left:87px;top:124px;width:1px;height:14px;background:#9eb6ce;"></div>
<div class="ch" style="left:72.0px;width:15.5px;">B</div>
<div style="left:358px;top:124px;width:1px;height:14px;background:#9eb6ce;"></div>
<div class="ch" style="left:87.5px;width:271.5px;">D</div>
<div style="left:454px;top:124px;width:1px;height:14px;background:#9eb6ce;"></div>
<div class="ch" style="left:359.0px;width:95.5px;">E</div>
<div style="left:505px;top:124px;width:1px;height:14px;background:#9eb6ce;"></div>
<div class="ch" style="left:454.5px;width:50.8px;">H</div>
<div style="left:556px;top:124px;width:1px;height:14px;background:#9eb6ce;"></div>
<div class="ch" style="left:505.3px;width:50.8px;">I</div>
<div style="left:606px;top:124px;width:1px;height:14px;background:#9eb6ce;"></div>
<div class="ch" style="left:556.1px;width:50.8px;">J</div>
<div style="left:657px;top:124px;width:1px;height:14px;background:#9eb6ce;"></div>
<div class="ch" style="left:607.0px;width:50.8px;">K</div>
<div style="left:708px;top:124px;width:1px;height:14px;background:#9eb6ce;"></div>
<div class="ch" style="left:657.8px;width:50.8px;">L</div>
<div style="left:759px;top:124px;width:1px;height:14px;background:#9eb6ce;"></div>
<div class="ch" style="left:708.6px;width:50.8px;">M</div>
<div style="left:810px;top:124px;width:1px;height:14px;background:#9eb6ce;"></div>
<div class="ch" style="left:759.4px;width:50.8px;">N</div>
<div style="left:861px;top:124px;width:1px;height:14px;background:#9eb6ce;"></div>
<div class="ch" style="left:810.2px;width:50.8px;">O</div>
<div style="left:911px;top:124px;width:1px;height:14px;background:#9eb6ce;"></div>
<div class="ch" style="left:861.1px;width:50.8px;">P</div>
<div style="left:962px;top:124px;width:1px;height:14px;background:#9eb6ce;"></div>
<div class="ch" style="left:911.9px;width:50.8px;">Q</div>
<div style="left:1013px;top:124px;width:1px;height:14px;background:#9eb6ce;"></div>
<div class="ch" style="left:962.7px;width:50.8px;">R</div>
<div style="left:1064px;top:124px;width:1px;height:14px;background:#9eb6ce;"></div>
<div class="ch" style="left:1013.5px;width:50.8px;">S</div>
<div style="left:1115px;top:124px;width:1px;height:14px;background:#9eb6ce;"></div>
<div class="ch" style="left:1064.3px;width:50.8px;">T</div>
<div style="left:1165px;top:124px;width:1px;height:14px;background:#9eb6ce;"></div>
<div class="ch" style="left:1115.2px;width:50.8px;">U</div>
<div style="left:1216px;top:124px;width:1px;height:14px;background:#9eb6ce;"></div>
<div class="ch" style="left:1166.0px;width:50.8px;">V</div>
<div style="left:1270px;top:124px;width:1px;height:14px;background:#9eb6ce;"></div>
<div class="ch" style="left:1216.8px;width:53.7px;">W</div>
<div style="left:1323px;top:124px;width:1px;height:14px;background:#9eb6ce;"></div>
<div class="ch" style="left:1270.5px;width:53.0px;">X</div>
<div style="left:1376px;top:124px;width:1px;height:14px;background:#9eb6ce;"></div>
<div class="ch" style="left:1323.5px;width:53.3px;">Y</div>
<div style="left:1430px;top:124px;width:1px;height:14px;background:#9eb6ce;"></div>
<div class="ch" style="left:1376.8px;width:53.6px;">Z</div>
<div style="left:1483px;top:124px;width:1px;height:14px;background:#9eb6ce;"></div>
<div class="ch" style="left:1430.4px;width:53.4px;">AA</div>
<div style="left:1537px;top:124px;width:1px;height:14px;background:#9eb6ce;"></div>
<div class="ch" style="left:1483.8px;width:53.4px;">AB</div>
<div class="ch" style="left:1537.2px;width:53.4px;">AC</div>
<div style="left:31px;top:139px;width:21px;height:656px;background:#e4ecf7;border-right:1px solid #9eb6ce;"></div>
<div style="left:31px;top:153px;width:21px;height:1px;background:#9eb6ce;"></div>
<div class="rh" style="top:139.5px;">1</div>
<div style="left:31px;top:167px;width:21px;height:1px;background:#9eb6ce;"></div>
<div class="rh" style="top:154.0px;">2</div>
<div style="left:31px;top:181px;width:21px;height:1px;background:#9eb6ce;"></div>
<div class="rh" style="top:168.0px;">3</div>
<div style="left:31px;top:195px;width:21px;height:1px;background:#9eb6ce;"></div>
<div class="rh" style="top:181.5px;">4</div>
<div style="left:31px;top:209px;width:21px;height:1px;background:#9eb6ce;"></div>
<div class="rh" style="top:196.5px;">5</div>
<div style="left:31px;top:224px;width:21px;height:1px;background:#9eb6ce;"></div>
<div class="rh" style="top:210.5px;">6</div>
<div style="left:31px;top:240px;width:21px;height:1px;background:#9eb6ce;"></div>
<div class="rh" style="top:227.0px;">7</div>
<div style="left:31px;top:257px;width:21px;height:1px;background:#9eb6ce;"></div>
<div class="rh" style="top:244.0px;">8</div>
<div style="left:31px;top:273px;width:21px;height:1px;background:#9eb6ce;"></div>
<div class="rh" style="top:260.0px;">9</div>
<div style="left:31px;top:288px;width:21px;height:1px;background:#9eb6ce;"></div>
<div class="rh" style="top:274.5px;">10</div>
<div style="left:31px;top:302px;width:21px;height:1px;background:#9eb6ce;"></div>
<div class="rh" style="top:289.0px;">11</div>
<div style="left:31px;top:316px;width:21px;height:1px;background:#9eb6ce;"></div>
<div class="rh" style="top:303.0px;">12</div>
<div style="left:31px;top:330px;width:21px;height:1px;background:#9eb6ce;"></div>
<div class="rh" style="top:317.0px;">13</div>
<div style="left:31px;top:344px;width:21px;height:1px;background:#9eb6ce;"></div>
<div class="rh" style="top:331.0px;">14</div>
<div style="left:31px;top:358px;width:21px;height:1px;background:#9eb6ce;"></div>
<div class="rh" style="top:345.0px;">15</div>
<div style="left:31px;top:372px;width:21px;height:1px;background:#9eb6ce;"></div>
<div class="rh" style="top:359.0px;">16</div>
<div style="left:31px;top:389px;width:21px;height:1px;background:#9eb6ce;"></div>
<div class="rh" style="top:375.5px;">17</div>
<div style="left:31px;top:403px;width:21px;height:1px;background:#9eb6ce;"></div>
<div class="rh" style="top:389.5px;">18</div>
<div style="left:31px;top:417px;width:21px;height:1px;background:#9eb6ce;"></div>
<div class="rh" style="top:404.0px;">19</div>
<div style="left:31px;top:431px;width:21px;height:1px;background:#9eb6ce;"></div>
<div class="rh" style="top:418.0px;">20</div>
<div style="left:31px;top:446px;width:21px;height:1px;background:#9eb6ce;"></div>
<div class="rh" style="top:432.5px;">21</div>
<div style="left:31px;top:460px;width:21px;height:1px;background:#9eb6ce;"></div>
<div class="rh" style="top:446.5px;">22</div>
<div style="left:31px;top:474px;width:21px;height:1px;background:#9eb6ce;"></div>
<div class="rh" style="top:460.5px;">23</div>
<div style="left:31px;top:491px;width:21px;height:1px;background:#9eb6ce;"></div>
<div class="rh" style="top:477.5px;">24</div>
<div style="left:31px;top:505px;width:21px;height:1px;background:#9eb6ce;"></div>
<div class="rh" style="top:492.0px;">25</div>
<div style="left:31px;top:519px;width:21px;height:1px;background:#9eb6ce;"></div>
<div class="rh" style="top:505.5px;">26</div>
<div style="left:31px;top:533px;width:21px;height:1px;background:#9eb6ce;"></div>
<div class="rh" style="top:520.0px;">27</div>
<div style="left:31px;top:547px;width:21px;height:1px;background:#9eb6ce;"></div>
<div class="rh" style="top:534.0px;">28</div>
<div style="left:31px;top:561px;width:21px;height:1px;background:#9eb6ce;"></div>
<div class="rh" style="top:548.0px;">29</div>
<div style="left:31px;top:576px;width:21px;height:1px;background:#9eb6ce;"></div>
<div class="rh" style="top:562.5px;">30</div>
<div style="left:31px;top:592px;width:21px;height:1px;background:#9eb6ce;"></div>
<div class="rh" style="top:579.0px;">31</div>
<div style="left:31px;top:609px;width:21px;height:1px;background:#9eb6ce;"></div>
<div class="rh" style="top:595.5px;">32</div>
<div style="left:31px;top:624px;width:21px;height:1px;background:#9eb6ce;"></div>
<div class="rh" style="top:611.0px;">33</div>
<div style="left:31px;top:640px;width:21px;height:1px;background:#9eb6ce;"></div>
<div class="rh" style="top:626.5px;">41</div>
<div style="left:31px;top:654px;width:21px;height:1px;background:#9eb6ce;"></div>
<div class="rh" style="top:641.5px;">42</div>
<div style="left:31px;top:671px;width:21px;height:1px;background:#9eb6ce;"></div>
<div class="rh" style="top:657.5px;">46</div>
<div style="left:31px;top:685px;width:21px;height:1px;background:#9eb6ce;"></div>
<div class="rh" style="top:672.5px;">47</div>
<div style="left:31px;top:702px;width:21px;height:1px;background:#9eb6ce;"></div>
<div class="rh" style="top:688.5px;">60</div>
<div style="left:31px;top:716px;width:21px;height:1px;background:#9eb6ce;"></div>
<div class="rh" style="top:703.5px;">61</div>
<div style="left:31px;top:732px;width:21px;height:1px;background:#9eb6ce;"></div>
<div class="rh" style="top:719.0px;">66</div>
<div style="left:31px;top:747px;width:21px;height:1px;background:#9eb6ce;"></div>
<div class="rh" style="top:734.5px;">67</div>
<div style="left:31px;top:763px;width:21px;height:1px;background:#9eb6ce;"></div>
<div class="rh" style="top:750.0px;">71</div>
<div style="left:31px;top:778px;width:21px;height:1px;background:#9eb6ce;"></div>
<div class="rh" style="top:765.0px;">72</div>
<div style="left:31px;top:794px;width:21px;height:1px;background:#9eb6ce;"></div>
<div class="rh" style="top:780.5px;">76</div>
<div style="left:0px;top:123px;width:31px;height:672px;background:#d5e3f2;"></div>
<div style="left:30px;top:123px;width:1px;height:672px;background:#8a96a6;"></div>
<div style="left:0px;top:138px;width:31px;height:1px;background:#8a96a6;"></div>
<div style="left:2px;top:124px;width:13px;height:13px;background:linear-gradient(#eaf1fb,#cfdff3);border:1px solid #9eb6ce;border-top-color:#f4f8fd;border-left-color:#f4f8fd;font-size:9.2px;line-height:12px;text-align:center;color:#000;">1</div>
<div style="left:15px;top:124px;width:13px;height:13px;background:linear-gradient(#eaf1fb,#cfdff3);border:1px solid #9eb6ce;border-top-color:#f4f8fd;border-left-color:#f4f8fd;font-size:9.2px;line-height:12px;text-align:center;color:#000;">2</div>
<div style="left:6px;top:211px;width:2px;height:63px;background:#000;"></div>
<div style="left:6px;top:211px;width:6px;height:2px;background:#000;"></div>
<div style="left:2px;top:274px;width:13px;height:13px;background:linear-gradient(#eef4fc,#d2e0f3);border:1px solid #9eb6ce;border-top-color:#f6f9fe;border-left-color:#f6f9fe;"></div>
<div style="left:5px;top:280px;width:7px;height:2px;background:#000;"></div>
<div style="left:19px;top:216px;width:2px;height:2px;background:#000;"></div>
<div style="left:19px;top:231px;width:2px;height:2px;background:#000;"></div>
<div style="left:19px;top:248px;width:2px;height:2px;background:#000;"></div>
<div style="left:19px;top:265px;width:2px;height:2px;background:#000;"></div>
<div style="left:6px;top:303px;width:2px;height:173px;background:#000;"></div>
<div style="left:6px;top:303px;width:6px;height:2px;background:#000;"></div>
<div style="left:2px;top:476px;width:13px;height:13px;background:linear-gradient(#eef4fc,#d2e0f3);border:1px solid #9eb6ce;border-top-color:#f6f9fe;border-left-color:#f6f9fe;"></div>
<div style="left:5px;top:482px;width:7px;height:2px;background:#000;"></div>
<div style="left:19px;top:308px;width:2px;height:2px;background:#000;"></div>
<div style="left:19px;top:323px;width:2px;height:2px;background:#000;"></div>
<div style="left:19px;top:337px;width:2px;height:2px;background:#000;"></div>
<div style="left:19px;top:351px;width:2px;height:2px;background:#000;"></div>
<div style="left:19px;top:365px;width:2px;height:2px;background:#000;"></div>
<div style="left:19px;top:380px;width:2px;height:2px;background:#000;"></div>
<div style="left:19px;top:395px;width:2px;height:2px;background:#000;"></div>
<div style="left:19px;top:409px;width:2px;height:2px;background:#000;"></div>
<div style="left:19px;top:424px;width:2px;height:2px;background:#000;"></div>
<div style="left:19px;top:438px;width:2px;height:2px;background:#000;"></div>
<div style="left:19px;top:452px;width:2px;height:2px;background:#000;"></div>
<div style="left:19px;top:466px;width:2px;height:2px;background:#000;"></div>
<div style="left:6px;top:506px;width:2px;height:89px;background:#000;"></div>
<div style="left:6px;top:506px;width:6px;height:2px;background:#000;"></div>
<div style="left:2px;top:595px;width:13px;height:13px;background:linear-gradient(#eef4fc,#d2e0f3);border:1px solid #9eb6ce;border-top-color:#f6f9fe;border-left-color:#f6f9fe;"></div>
<div style="left:5px;top:601px;width:7px;height:2px;background:#000;"></div>
<div style="left:19px;top:511px;width:2px;height:2px;background:#000;"></div>
<div style="left:19px;top:526px;width:2px;height:2px;background:#000;"></div>
<div style="left:19px;top:540px;width:2px;height:2px;background:#000;"></div>
<div style="left:19px;top:554px;width:2px;height:2px;background:#000;"></div>
<div style="left:19px;top:568px;width:2px;height:2px;background:#000;"></div>
<div style="left:19px;top:584px;width:2px;height:2px;background:#000;"></div>
<div style="left:2px;top:626px;width:13px;height:13px;background:linear-gradient(#eef4fc,#d2e0f3);border:1px solid #9eb6ce;border-top-color:#f6f9fe;border-left-color:#f6f9fe;"></div>
<div style="left:5px;top:632px;width:7px;height:2px;background:#000;"></div>
<div style="left:7px;top:629px;width:2px;height:8px;background:#000;"></div>
<div style="left:2px;top:657px;width:13px;height:13px;background:linear-gradient(#eef4fc,#d2e0f3);border:1px solid #9eb6ce;border-top-color:#f6f9fe;border-left-color:#f6f9fe;"></div>
<div style="left:5px;top:663px;width:7px;height:2px;background:#000;"></div>
<div style="left:7px;top:660px;width:2px;height:8px;background:#000;"></div>
<div style="left:2px;top:687px;width:13px;height:13px;background:linear-gradient(#eef4fc,#d2e0f3);border:1px solid #9eb6ce;border-top-color:#f6f9fe;border-left-color:#f6f9fe;"></div>
<div style="left:5px;top:693px;width:7px;height:2px;background:#000;"></div>
<div style="left:7px;top:690px;width:2px;height:8px;background:#000;"></div>
<div style="left:2px;top:718px;width:13px;height:13px;background:linear-gradient(#eef4fc,#d2e0f3);border:1px solid #9eb6ce;border-top-color:#f6f9fe;border-left-color:#f6f9fe;"></div>
<div style="left:5px;top:724px;width:7px;height:2px;background:#000;"></div>
<div style="left:7px;top:721px;width:2px;height:8px;background:#000;"></div>
<div style="left:2px;top:749px;width:13px;height:13px;background:linear-gradient(#eef4fc,#d2e0f3);border:1px solid #9eb6ce;border-top-color:#f6f9fe;border-left-color:#f6f9fe;"></div>
<div style="left:5px;top:755px;width:7px;height:2px;background:#000;"></div>
<div style="left:7px;top:752px;width:2px;height:8px;background:#000;"></div>
<div style="left:2px;top:780px;width:13px;height:13px;background:linear-gradient(#eef4fc,#d2e0f3);border:1px solid #9eb6ce;border-top-color:#f6f9fe;border-left-color:#f6f9fe;"></div>
<div style="left:5px;top:786px;width:7px;height:2px;background:#000;"></div>
<div style="left:7px;top:783px;width:2px;height:8px;background:#000;"></div>
<div style="left:1585px;top:123px;width:15px;height:672px;background:#7c9fd4;"></div>
<div style="left:1598px;top:123px;width:2px;height:672px;background:#c5d6ec;"></div>
<div style="left:1585px;top:123px;width:13px;height:672px;background:linear-gradient(90deg,#6f93cc,#8fb0df 30%,#7da0d6 100%);"></div>
<div style="left:1586px;top:123px;width:11px;height:4px;background:#e8eef7;border:1px solid #7b98c4;border-radius:1px;"></div>
<svg style="left:1587px;top:131px" width="10" height="6"><polygon points="5,0 10,5 0,5" fill="#3b4a6b"/></svg>
<div style="left:1586px;top:141px;width:11px;height:636px;background:linear-gradient(90deg,#f6f8fb 0%,#e3e8f0 45%,#c4cfe0 100%);border:1px solid #6d82a8;border-radius:2px;"></div>
<div style="left:0px;top:0px;width:1600px;height:4px;background:linear-gradient(#e9ecf1,#dde2ea);"></div>
<div style="left:40px;top:0px;width:96px;height:3px;background:#eef1f6;border:1px solid #c3cbd8;border-top:none;border-radius:0 0 10px 4px;"></div>
<div style="left:0px;top:4px;width:1600px;height:20px;background:#bfdbff;"></div>
<div style="left:0px;top:23px;width:1600px;height:79px;background:#bfdbff;"></div>
<div style="left:0px;top:23.5px;width:1599px;height:74px;background:linear-gradient(#dce8f6 0%,#d5e3f4 17%,#c7d9ef 20%,#c6d8ef 32%,#cfe0f3 62%,#dcedfa 88%,#e3f4fd 100%);border:1px solid #9dbfea;border-left:none;border-bottom-color:#c9e3f8;border-radius:0 4px 4px 0;"></div>
<div style="left:0px;top:99px;width:1600px;height:3px;background:linear-gradient(#adc6e8,#9bb8e0);"></div>
<div style="left:40px;top:6px;width:55px;height:19px;background:linear-gradient(#f4f8fd 0%,#e3edf9 60%,#dbe7f5 100%);border:1px solid #8db2e3;border-bottom:none;border-radius:4px 4px 0 0;box-shadow:inset 0 0 2px #fff;"></div>
<div class="rt" style="left:49.6px;top:8.8px;font-size:9.7px;color:#15428b;letter-spacing:-0.36px;">Главная</div>
<div class="rt" style="left:107.4px;top:8.8px;font-size:9.7px;color:#15428b;letter-spacing:-0.35px;">Вставка</div>
<div class="rt" style="left:166.2px;top:8.8px;font-size:9.7px;color:#15428b;letter-spacing:-0.18px;">Разметка страницы</div>
<div class="rt" style="left:276.4px;top:8.8px;font-size:9.7px;color:#15428b;letter-spacing:-0.34px;">Формулы</div>
<div class="rt" style="left:340.8px;top:8.8px;font-size:9.7px;color:#15428b;letter-spacing:-0.07px;">Данные</div>
<div class="rt" style="left:400.5px;top:8.8px;font-size:9.7px;color:#15428b;letter-spacing:-0.04px;">Рецензирование</div>
<div class="rt" style="left:499.5px;top:8.8px;font-size:9.7px;color:#15428b;letter-spacing:-0.35px;">Вид</div>
<div class="rt" style="left:539.5px;top:8.8px;font-size:9.7px;color:#15428b;letter-spacing:0.01px;">Разработчик</div>
<svg style="left:0;top:0" width="40" height="24"><defs><radialGradient id="ob" cx="50%" cy="35%" r="70%"><stop offset="0" stop-color="#ffffff"/><stop offset=".65" stop-color="#e3e6ec"/><stop offset="1" stop-color="#aab1be"/></radialGradient></defs>
<circle cx="18" cy="3.8" r="16.4" fill="url(#ob)" stroke="#97a0b0" stroke-width="1"/>
<rect x="10" y="-2" width="8.6" height="10" rx="2" fill="#f39a1f"/><rect x="19.6" y="-2" width="7.6" height="10" rx="2" fill="#62a73b"/>
<rect x="12.6" y="2.2" width="4.6" height="4" rx=".8" fill="#fdf0c8"/><rect x="20.8" y="2.2" width="4" height="3.2" rx=".8" fill="#e3f3d0"/><rect x="10" y="-1" width="17" height="2.2" fill="#f8f8f8" opacity=".35"/></svg>
<svg style="left:1528px;top:5px" width="72" height="16"><defs><radialGradient id="hp" cx="40%" cy="35%" r="65%"><stop offset="0" stop-color="#5d8df0"/><stop offset="1" stop-color="#0a2fb0"/></radialGradient></defs>
<circle cx="8.6" cy="8" r="6" fill="#e9f1fb" stroke="#9db9e3" stroke-width=".8"/><circle cx="8.6" cy="8" r="4.8" fill="url(#hp)"/>
<text x="8.6" y="11.3" font-family="Liberation Sans, sans-serif" font-weight="bold" font-size="9" fill="#fff" text-anchor="middle">?</text>
<rect x="23.5" y="10" width="6.5" height="1.4" fill="#5f6670"/>
<path d="M41.5 6.5h6v4.5h-6z M43 6.5v-1.5h6.3v4.5h-1.8" fill="none" stroke="#5f6670" stroke-width="1.2"/>
<path d="M60 5l7 7M67 5l-7 7" stroke="#5f6670" stroke-width="1.7"/></svg>
<div style="left:3px;top:26px;width:158px;height:71px;border:1px solid #b2c9e6;border-radius:3px;background:linear-gradient(#dfe9f6 0%,#d7e4f4 15%,#c9daef 18%,#d2e1f2 80.5%,#c2d8f1 81.5%,#c3d9f2 100%);box-shadow:0 0 0 1px rgba(240,246,253,.7) ;"></div>
<div class="rt" style="left:-26.5px;width:200px;top:83.5px;text-align:center;font-size:9.7px;color:#3e6aaa;-webkit-text-stroke:0.1px currentColor;">Буфер обмена</div>
<svg style="left:150px;top:86px" width="7" height="7"><rect x="2" y="2" width="5" height="5" fill="#f4f8fd"/><path d="M0.5 5V0.5H5" fill="none" stroke="#5f7fb2" stroke-width="1"/><path d="M2.8 2.8L6 6M6.2 3.2V6.2H3.2" fill="none" stroke="#4f6fa6" stroke-width="1.1"/></svg>
<div style="left:164px;top:26px;width:163px;height:71px;border:1px solid #b2c9e6;border-radius:3px;background:linear-gradient(#dfe9f6 0%,#d7e4f4 15%,#c9daef 18%,#d2e1f2 80.5%,#c2d8f1 81.5%,#c3d9f2 100%);box-shadow:0 0 0 1px rgba(240,246,253,.7) ;"></div>
<div class="rt" style="left:137.5px;width:200px;top:83.5px;text-align:center;font-size:9.7px;color:#3e6aaa;-webkit-text-stroke:0.1px currentColor;">Шрифт</div>
<svg style="left:316px;top:86px" width="7" height="7"><rect x="2" y="2" width="5" height="5" fill="#f4f8fd"/><path d="M0.5 5V0.5H5" fill="none" stroke="#5f7fb2" stroke-width="1"/><path d="M2.8 2.8L6 6M6.2 3.2V6.2H3.2" fill="none" stroke="#4f6fa6" stroke-width="1.1"/></svg>
<div style="left:329.5px;top:26px;width:295.5px;height:71px;border:1px solid #b2c9e6;border-radius:3px;background:linear-gradient(#dfe9f6 0%,#d7e4f4 15%,#c9daef 18%,#d2e1f2 80.5%,#c2d8f1 81.5%,#c3d9f2 100%);box-shadow:0 0 0 1px rgba(240,246,253,.7) ;"></div>
<div class="rt" style="left:369.5px;width:200px;top:83.5px;text-align:center;font-size:9.7px;color:#3e6aaa;-webkit-text-stroke:0.1px currentColor;">Выравнивание</div>
<svg style="left:614px;top:86px" width="7" height="7"><rect x="2" y="2" width="5" height="5" fill="#f4f8fd"/><path d="M0.5 5V0.5H5" fill="none" stroke="#5f7fb2" stroke-width="1"/><path d="M2.8 2.8L6 6M6.2 3.2V6.2H3.2" fill="none" stroke="#4f6fa6" stroke-width="1.1"/></svg>
<div style="left:628.5px;top:26px;width:112.5px;height:71px;border:1px solid #b2c9e6;border-radius:3px;background:linear-gradient(#dfe9f6 0%,#d7e4f4 15%,#c9daef 18%,#d2e1f2 80.5%,#c2d8f1 81.5%,#c3d9f2 100%);box-shadow:0 0 0 1px rgba(240,246,253,.7) ;"></div>
<div class="rt" style="left:577.0px;width:200px;top:83.5px;text-align:center;font-size:9.7px;color:#3e6aaa;-webkit-text-stroke:0.1px currentColor;">Число</div>
<svg style="left:730px;top:86px" width="7" height="7"><rect x="2" y="2" width="5" height="5" fill="#f4f8fd"/><path d="M0.5 5V0.5H5" fill="none" stroke="#5f7fb2" stroke-width="1"/><path d="M2.8 2.8L6 6M6.2 3.2V6.2H3.2" fill="none" stroke="#4f6fa6" stroke-width="1.1"/></svg>
<div style="left:744px;top:26px;width:453px;height:71px;border:1px solid #b2c9e6;border-radius:3px;background:linear-gradient(#dfe9f6 0%,#d7e4f4 15%,#c9daef 18%,#d2e1f2 80.5%,#c2d8f1 81.5%,#c3d9f2 100%);box-shadow:0 0 0 1px rgba(240,246,253,.7) ;"></div>
<div class="rt" style="left:870.5px;width:200px;top:83.5px;text-align:center;font-size:9.7px;color:#3e6aaa;-webkit-text-stroke:0.1px currentColor;">Стили</div>
<div style="left:1200px;top:26px;width:126.5px;height:71px;border:1px solid #b2c9e6;border-radius:3px;background:linear-gradient(#dfe9f6 0%,#d7e4f4 15%,#c9daef 18%,#d2e1f2 80.5%,#c2d8f1 81.5%,#c3d9f2 100%);box-shadow:0 0 0 1px rgba(240,246,253,.7) ;"></div>
<div class="rt" style="left:1162.5px;width:200px;top:83.5px;text-align:center;font-size:9.7px;color:#3e6aaa;-webkit-text-stroke:0.1px currentColor;">Ячейки</div>
<div style="left:1329.5px;top:26px;width:194.5px;height:71px;border:1px solid #b2c9e6;border-radius:3px;background:linear-gradient(#dfe9f6 0%,#d7e4f4 15%,#c9daef 18%,#d2e1f2 80.5%,#c2d8f1 81.5%,#c3d9f2 100%);box-shadow:0 0 0 1px rgba(240,246,253,.7) ;"></div>
<div class="rt" style="left:1326.5px;width:200px;top:83.5px;text-align:center;font-size:9.7px;color:#3e6aaa;-webkit-text-stroke:0.1px currentColor;">Редактирование</div>
<svg style="left:16px;top:29.5px" width="24" height="26" viewBox="0 0 24 26"><defs><linearGradient id="cb" x1="0" x2="1"><stop offset="0" stop-color="#f9d98a"/><stop offset="1" stop-color="#ecb550"/></linearGradient></defs>
<rect x="1.2" y="2.8" width="19.3" height="20.2" rx="1.6" fill="url(#cb)" stroke="#c4963a" stroke-width="1"/>
<path d="M5.5 5.8v-2.3h3.2c.2-1.6 1-2.4 2.3-2.4s2.100.8 2.300 2.400h3.200v2.300z" fill="#e4e6ea" stroke="#7d828c" stroke-width=".8"/><circle cx="11" cy="2.600" r=".8" fill="#8a5a2a"/>
<path d="M9.500 24.800h13.500V13.600l-3.600-3.600h-9.900z" fill="#9aa3b3" opacity=".55"/>
<path d="M8.500 9.800h9.600l4 4V24.300h-13.600z" fill="#fbfcfe" stroke="#98a2b3" stroke-width=".9"/>
<path d="M18.100 9.800v4h4" fill="#dfe4ec" stroke="#98a2b3" stroke-width=".8"/>
<path d="M10.300 13h6M10.300 15h9.800M10.300 17h9.800M10.300 19h9.800M10.300 21h9.800M10.300 23h9.800" stroke="#c3c9d4" stroke-width=".8"/></svg>
<div class="rt" style="left:7.6px;top:58.8px;font-size:9.7px;color:#15428b;letter-spacing:-0.25px;">Вставить</div>
<svg style="left:24.5px;top:73.5px" width="5" height="3"><polygon points="0,0 5,0 2.5,3" fill="#6482ae"/></svg>
<svg style="left:53.5px;top:30.5px" width="10" height="12" viewBox="0 0 10 12"><path d="M2 0.300L5.900 7.300M8 0.300L4.100 7.300" stroke="#69717f" stroke-width="1.700" fill="none"/><circle cx="2.700" cy="9" r="1.700" fill="none" stroke="#2347b8" stroke-width="1.600"/><circle cx="7.300" cy="9" r="1.700" fill="none" stroke="#2347b8" stroke-width="1.600"/></svg>
<div class="rt" style="left:67.5px;top:30.7px;font-size:9.7px;color:#15428b;letter-spacing:-0.21px;">Вырезать</div>
<svg style="left:51.500px;top:49px" width="13.500" height="11.500" viewBox="0 0 14 12"><path d="M0.500 0.500h5l2 2v6h-7z" fill="#f4f7fc" stroke="#8795ad" stroke-width=".9"/><path d="M1.800 3h3.500M1.800 4.800h4M1.800 6.600h2.500" stroke="#7c9bdc" stroke-width=".8"/><path d="M5.500 3.300h5l2.700 2.700v5.500h-7.700z" fill="#fdfeff" stroke="#3559b8" stroke-width="1"/><path d="M7 6.300h3M7 8h4.800M7 9.700h4.800" stroke="#4f78d6" stroke-width=".9"/></svg>
<div class="rt" style="left:67.5px;top:48.7px;font-size:9.7px;color:#15428b;letter-spacing:0.13px;">Копировать</div>
<svg style="left:52px;top:67px" width="13.500" height="12" viewBox="0 0 13.500 12"><path d="M12.300 1.200L9.300 4" stroke="#5a49a8" stroke-width="2.600" stroke-linecap="round"/><path d="M10 3.200L7.600 5.600" stroke="#8b9099" stroke-width="3.200"/><path d="M7.200 3.800L0.600 6.800c1 1.800 2.600 3.400 5 4.600l4.600-5z" fill="#f2da7c" stroke="#a08a3c" stroke-width=".8"/><path d="M3 7.500l2.500 2.500M5 6.300l2.300 2.500" stroke="#c9ae52" stroke-width=".7"/></svg>
<div class="rt" style="left:67px;top:67.2px;font-size:9.7px;color:#15428b;letter-spacing:0.04px;">Формат по образцу</div>
<div style="left:167px;top:34.2px;width:80px;height:18.1px;background:#eaf2fb;border:1px solid #b4c9e6;"></div>
<div style="left:247px;top:34.2px;width:36px;height:18.1px;background:#eaf2fb;border:1px solid #b4c9e6;border-left:none;"></div>
<div class="rt" style="left:169.5px;top:37.4px;font-size:9.1px;color:#000;letter-spacing:-0.05px;-webkit-text-stroke:0.15px #000;">Times New Rom</div>
<svg style="left:238.5px;top:41.5px" width="5" height="3"><polygon points="0,0 5,0 2.5,3" fill="#6482ae"/></svg>
<div class="rt" style="left:250.5px;top:37.4px;font-size:9.3px;color:#000;-webkit-text-stroke:0.15px #000;">10</div>
<svg style="left:274.5px;top:41.5px" width="5" height="3"><polygon points="0,0 5,0 2.5,3" fill="#6482ae"/></svg>
<div style="left:286.5px;top:34.2px;width:37.0px;height:18.099999999999994px;border:1px solid #a9c0de;border-radius:3px;background:linear-gradient(#dce8f6 0%,#d3e1f3 45%,#c5d7ee 50%,#d0dff2 100%);"></div>
<div style="left:305px;top:35.2px;width:1px;height:16.099999999999994px;background:linear-gradient(#d0def0,#b4c8e2,#d0def0);"></div>
<div style="left:289.5px;top:36px;font-family:'Liberation Serif',serif;font-size:14px;line-height:16px;color:#222;">A</div>
<div style="left:308.5px;top:39px;font-family:'Liberation Serif',serif;font-size:10.5px;line-height:12px;color:#222;">A</div>
<svg style="left:298px;top:37px" width="5" height="3"><polygon points="0,3 5,3 2.5,0" fill="#2e5fc4"/></svg>
<svg style="left:315px;top:38px" width="5" height="3"><polygon points="0,0 5,0 2.5,3" fill="#2e5fc4"/></svg>
<div style="left:167px;top:58px;width:66.5px;height:18.700000000000003px;border:1px solid #a9c0de;border-radius:3px;background:linear-gradient(#dce8f6 0%,#d3e1f3 45%,#c5d7ee 50%,#d0dff2 100%);"></div>
<div style="left:186px;top:59px;width:1px;height:16.700000000000003px;background:linear-gradient(#d0def0,#b4c8e2,#d0def0);"></div>
<div style="left:205px;top:59px;width:1px;height:16.700000000000003px;background:linear-gradient(#d0def0,#b4c8e2,#d0def0);"></div>
<div style="left:171px;top:60px;font-family:'Liberation Serif',serif;font-weight:bold;font-size:12.5px;line-height:14px;color:#111;">Ж</div>
<div style="left:191.5px;top:60px;font-family:'Liberation Serif',serif;font-weight:bold;font-style:italic;font-size:12.5px;line-height:14px;color:#111;">К</div>
<div style="left:211px;top:60px;font-family:'Liberation Serif',serif;font-weight:bold;font-size:12.5px;line-height:14px;color:#111;text-decoration:underline;">Ч</div>
<svg style="left:225.0px;top:66.0px" width="5" height="3"><polygon points="0,0 5,0 2.5,3" fill="#6482ae"/></svg>
<div style="left:236.5px;top:58px;width:28.5px;height:18.700000000000003px;border:1px solid #a9c0de;border-radius:3px;background:linear-gradient(#dce8f6 0%,#d3e1f3 45%,#c5d7ee 50%,#d0dff2 100%);"></div>
<svg style="left:241px;top:61px" width="12" height="13" viewBox="0 0 12 13"><path d="M0.5 0.5h11v10h-11zM6 0.5v10M0.5 5.5h11" fill="none" stroke="#a9b1bf" stroke-width=".9"/><path d="M0 12h12" stroke="#4d5562" stroke-width="1.6"/></svg>
<svg style="left:257.0px;top:66.0px" width="5" height="3"><polygon points="0,0 5,0 2.5,3" fill="#6482ae"/></svg>
<div style="left:268px;top:58px;width:55.5px;height:18.700000000000003px;border:1px solid #a9c0de;border-radius:3px;background:linear-gradient(#dce8f6 0%,#d3e1f3 45%,#c5d7ee 50%,#d0dff2 100%);"></div>
<div style="left:295.5px;top:59px;width:1px;height:16.700000000000003px;background:linear-gradient(#d0def0,#b4c8e2,#d0def0);"></div>
<svg style="left:271px;top:60px" width="15" height="15" viewBox="0 0 15 15"><path d="M5.5 1.5l5.5 4.5-4.5 4.5-4.5-4z" fill="#fdfdfd" stroke="#5f6a7c" stroke-width=".9"/><path d="M11 6c1.6.6 2.2 2 1.6 3.8" fill="none" stroke="#2e62c9" stroke-width="1.5"/><rect x="0" y="11" width="14" height="3.3" fill="#ffff00"/></svg>
<svg style="left:287.5px;top:66.0px" width="5" height="3"><polygon points="0,0 5,0 2.5,3" fill="#6482ae"/></svg>
<div style="left:300px;top:58.5px;font-family:'Liberation Serif',serif;font-size:13.5px;line-height:14px;color:#2b57b8;font-weight:bold;">A</div>
<div style="left:298.5px;top:71px;width:14px;height:3.3px;background:#ff0000;"></div>
<svg style="left:315.5px;top:66.0px" width="5" height="3"><polygon points="0,0 5,0 2.5,3" fill="#6482ae"/></svg>
<div style="left:333px;top:34.2px;width:57px;height:18.099999999999994px;border:1px solid #a9c0de;border-radius:3px;background:linear-gradient(#dce8f6 0%,#d3e1f3 45%,#c5d7ee 50%,#d0dff2 100%);"></div>
<div style="left:352px;top:35.2px;width:1px;height:16.099999999999994px;background:linear-gradient(#d0def0,#b4c8e2,#d0def0);"></div>
<div style="left:371px;top:35.2px;width:1px;height:16.099999999999994px;background:linear-gradient(#d0def0,#b4c8e2,#d0def0);"></div>
<div style="left:371.5px;top:34.2px;width:18.5px;height:18.1px;background:linear-gradient(#ffe2b0 0%,#ffc468 40%,#ffb548 55%,#ffe38f 100%);border:1px solid #f0c27a;border-radius:0 3px 3px 0;"></div>
<div style="left:337px;top:37.5px;width:11px;height:1.7px;background:#414a57;"></div>
<div style="left:337px;top:40.0px;width:11px;height:1.7px;background:#414a57;"></div>
<div style="left:337px;top:42.5px;width:11px;height:1.7px;background:#414a57;"></div>
<div style="left:356.5px;top:41.5px;width:11px;height:1.7px;background:#414a57;"></div>
<div style="left:356.5px;top:44.0px;width:11px;height:1.7px;background:#414a57;"></div>
<div style="left:356.5px;top:46.5px;width:11px;height:1.7px;background:#414a57;"></div>
<div style="left:375.5px;top:44.0px;width:11px;height:1.7px;background:#5a4a2a;"></div>
<div style="left:375.5px;top:46.5px;width:11px;height:1.7px;background:#5a4a2a;"></div>
<div style="left:375.5px;top:49.0px;width:11px;height:1.7px;background:#5a4a2a;"></div>
<div style="left:393px;top:34.2px;width:26px;height:18.099999999999994px;border:1px solid #a9c0de;border-radius:3px;background:linear-gradient(#dce8f6 0%,#d3e1f3 45%,#c5d7ee 50%,#d0dff2 100%);"></div>
<svg style="left:396px;top:37px" width="14" height="13" viewBox="0 0 14 13"><text x="0" y="9" font-family="Liberation Sans,sans-serif" font-size="8" fill="#222" transform="rotate(-40 5 8)">ab</text><path d="M4 12L12 5" stroke="#b0503a" stroke-width="1"/></svg>
<svg style="left:411.0px;top:41.5px" width="5" height="3"><polygon points="0,0 5,0 2.5,3" fill="#6482ae"/></svg>
<div style="left:333px;top:58px;width:57px;height:18.700000000000003px;border:1px solid #a9c0de;border-radius:3px;background:linear-gradient(#dce8f6 0%,#d3e1f3 45%,#c5d7ee 50%,#d0dff2 100%);"></div>
<div style="left:352px;top:59px;width:1px;height:16.700000000000003px;background:linear-gradient(#d0def0,#b4c8e2,#d0def0);"></div>
<div style="left:371px;top:59px;width:1px;height:16.700000000000003px;background:linear-gradient(#d0def0,#b4c8e2,#d0def0);"></div>
<div style="left:336.5px;top:61.5px;width:12px;height:1.7px;background:#414a57;"></div>
<div style="left:336.5px;top:64.0px;width:9px;height:1.7px;background:#414a57;"></div>
<div style="left:336.5px;top:66.5px;width:12px;height:1.7px;background:#414a57;"></div>
<div style="left:336.5px;top:69.0px;width:9px;height:1.7px;background:#414a57;"></div>
<div style="left:336.5px;top:71.5px;width:12px;height:1.7px;background:#414a57;"></div>
<div style="left:355.5px;top:61.5px;width:12px;height:1.7px;background:#414a57;"></div>
<div style="left:357.0px;top:64.0px;width:9px;height:1.7px;background:#414a57;"></div>
<div style="left:355.5px;top:66.5px;width:12px;height:1.7px;background:#414a57;"></div>
<div style="left:357.0px;top:69.0px;width:9px;height:1.7px;background:#414a57;"></div>
<div style="left:355.5px;top:71.5px;width:12px;height:1.7px;background:#414a57;"></div>
<div style="left:374.5px;top:61.5px;width:12px;height:1.7px;background:#414a57;"></div>
<div style="left:377.5px;top:64.0px;width:9px;height:1.7px;background:#414a57;"></div>
<div style="left:374.5px;top:66.5px;width:12px;height:1.7px;background:#414a57;"></div>
<div style="left:377.5px;top:69.0px;width:9px;height:1.7px;background:#414a57;"></div>
<div style="left:374.5px;top:71.5px;width:12px;height:1.7px;background:#414a57;"></div>
<div style="left:393px;top:58px;width:37px;height:18.700000000000003px;border:1px solid #a9c0de;border-radius:3px;background:linear-gradient(#dce8f6 0%,#d3e1f3 45%,#c5d7ee 50%,#d0dff2 100%);"></div>
<div style="left:411.5px;top:59px;width:1px;height:16.700000000000003px;background:linear-gradient(#d0def0,#b4c8e2,#d0def0);"></div>
<div style="left:399px;top:61.5px;width:9px;height:1.7px;background:#414a57;"></div>
<div style="left:401px;top:64.0px;width:7px;height:1.7px;background:#414a57;"></div>
<div style="left:399px;top:66.5px;width:9px;height:1.7px;background:#414a57;"></div>
<div style="left:401px;top:69.0px;width:7px;height:1.7px;background:#414a57;"></div>
<div style="left:399px;top:71.5px;width:9px;height:1.7px;background:#414a57;"></div>
<div style="left:417.5px;top:61.5px;width:9px;height:1.7px;background:#414a57;"></div>
<div style="left:419.5px;top:64.0px;width:7px;height:1.7px;background:#414a57;"></div>
<div style="left:417.5px;top:66.5px;width:9px;height:1.7px;background:#414a57;"></div>
<div style="left:419.5px;top:69.0px;width:7px;height:1.7px;background:#414a57;"></div>
<div style="left:417.5px;top:71.5px;width:9px;height:1.7px;background:#414a57;"></div>
<svg style="left:395px;top:64px" width="6" height="6"><path d="M6 3H1M3 0.5L0.5 3 3 5.5" stroke="#2e62c9" stroke-width="1.3" fill="none"/></svg>
<svg style="left:413.5px;top:64px" width="6" height="6"><path d="M0 3H5M3 0.5L5.5 3 3 5.5" stroke="#2e62c9" stroke-width="1.3" fill="none"/></svg>
<div style="left:434px;top:32px;width:1px;height:45px;background:#a9bfdc;"></div>
<div style="left:435px;top:32px;width:1px;height:45px;background:#e6eef9;"></div>
<svg style="left:439px;top:36px" width="14" height="14" viewBox="0 0 14 14"><rect x=".5" y=".5" width="11" height="4" fill="#fdfdfd" stroke="#7b8596" stroke-width=".8"/><rect x=".5" y="6" width="11" height="6.5" fill="#fdfdfd" stroke="#7b8596" stroke-width=".8"/><path d="M2 2.5h10M2 8h7M2 10.3h7" stroke="#e39a3b" stroke-width="1.1"/><path d="M13 6.5v3h-2.3" stroke="#4b5563" stroke-width=".9" fill="none"/></svg>
<div class="rt" style="left:455.5px;top:37.5px;font-size:9.7px;color:#15428b;letter-spacing:-0.15px;">Перенос текста</div>
<svg style="left:439px;top:60px" width="14" height="14" viewBox="0 0 14 14"><rect x=".5" y=".5" width="13" height="12.5" fill="#fdfdfd" stroke="#7b8596" stroke-width=".8"/><path d="M.5 4h13M.5 9.5h13M5 .5v3.5M9.5 .5v3.5M5 9.5v3.5M9.5 9.5v3.5" stroke="#9aa5b8" stroke-width=".7"/><rect x="1" y="4.5" width="12" height="4.5" fill="#cfd8e8"/><text x="7" y="8.6" font-family="Liberation Sans,sans-serif" font-weight="bold" font-size="5.5" fill="#222" text-anchor="middle">a</text><path d="M1.5 6.8h3M12.5 6.8h-3" stroke="#222" stroke-width="1.2"/></svg>
<div class="rt" style="left:455.5px;top:61.5px;font-size:9.7px;color:#15428b;letter-spacing:-0.02px;">Объединить и поместить в центре</div>
<svg style="left:614.0px;top:66.0px" width="5" height="3"><polygon points="0,0 5,0 2.5,3" fill="#6482ae"/></svg>
<div style="left:631.5px;top:34.2px;width:106.5px;height:18.1px;background:#eaf2fb;border:1px solid #b4c9e6;"></div>
<div class="rt" style="left:633.8px;top:37.2px;font-size:9.7px;color:#000;letter-spacing:-0.05px;-webkit-text-stroke:0.15px #000;">Числовой</div>
<svg style="left:729.0px;top:41.5px" width="5" height="3"><polygon points="0,0 5,0 2.5,3" fill="#6482ae"/></svg>
<div style="left:631.5px;top:58px;width:66.0px;height:18.700000000000003px;border:1px solid #a9c0de;border-radius:3px;background:linear-gradient(#dce8f6 0%,#d3e1f3 45%,#c5d7ee 50%,#d0dff2 100%);"></div>
<div style="left:658.5px;top:59px;width:1px;height:16.700000000000003px;background:linear-gradient(#d0def0,#b4c8e2,#d0def0);"></div>
<div style="left:678px;top:59px;width:1px;height:16.700000000000003px;background:linear-gradient(#d0def0,#b4c8e2,#d0def0);"></div>
<svg style="left:634px;top:60px" width="15" height="15" viewBox="0 0 15 15"><rect x=".5" y=".5" width="13" height="7.5" rx="1" fill="#3f66c4" stroke="#2a4a9a" stroke-width=".7"/><ellipse cx="7" cy="4.2" rx="3.6" ry="2.2" fill="#b9cbee"/><ellipse cx="11" cy="12.5" rx="3" ry="1.2" fill="#f0b73e" stroke="#b98420" stroke-width=".5"/><ellipse cx="11" cy="10.8" rx="3" ry="1.2" fill="#f6c85a" stroke="#b98420" stroke-width=".5"/><ellipse cx="11" cy="9.1" rx="3" ry="1.2" fill="#fbd777" stroke="#b98420" stroke-width=".5"/><ellipse cx="5.5" cy="12.8" rx="2.6" ry="1.1" fill="#f0b73e" stroke="#b98420" stroke-width=".5"/></svg>
<svg style="left:651.5px;top:66.0px" width="5" height="3"><polygon points="0,0 5,0 2.5,3" fill="#6482ae"/></svg>
<div class="rt" style="left:658.5px;width:20px;top:61.5px;text-align:center;font-size:11.5px;color:#333;">%</div>
<div class="rt" style="left:676.2px;width:24px;top:61.8px;text-align:center;font-size:10px;color:#333;letter-spacing:-0.9px;">000</div>
<div style="left:700.5px;top:58px;width:37.5px;height:18.700000000000003px;border:1px solid #a9c0de;border-radius:3px;background:linear-gradient(#dce8f6 0%,#d3e1f3 45%,#c5d7ee 50%,#d0dff2 100%);"></div>
<div style="left:719.5px;top:59px;width:1px;height:16.700000000000003px;background:linear-gradient(#d0def0,#b4c8e2,#d0def0);"></div>
<svg style="left:702px;top:60px" width="16" height="14" viewBox="0 0 16 14"><path d="M7 3.5H2M4.2 1L1.7 3.5 4.2 6" stroke="#2e62c9" stroke-width="1.3" fill="none"/><text x="9.5" y="6" font-family="Liberation Sans,sans-serif" font-size="6.5" fill="#222">0</text><text x="3.5" y="12.8" font-family="Liberation Sans,sans-serif" font-size="6.5" fill="#222">,00</text></svg>
<svg style="left:721px;top:60px" width="16" height="14" viewBox="0 0 16 14"><path d="M1 10H6M3.8 7.5L6.3 10 3.8 12.5" stroke="#2e62c9" stroke-width="1.3" fill="none"/><text x="6" y="6" font-family="Liberation Sans,sans-serif" font-size="6.5" fill="#222">,00</text><text x="7.5" y="12.8" font-family="Liberation Sans,sans-serif" font-size="6.5" fill="#222">,0</text></svg>
<svg style="left:779px;top:31.5px" width="26" height="24" viewBox="0 0 26 24"><rect x=".5" y=".5" width="22" height="19.5" fill="#fbfcfe" stroke="#b7c0cf" stroke-width=".8"/><path d="M.5 5.4h22" stroke="#c7cfdb" stroke-width=".7"/><path d="M.5 10.3h22" stroke="#c7cfdb" stroke-width=".7"/><path d="M.5 15.2h22" stroke="#c7cfdb" stroke-width=".7"/><path d="M6.0 .5v19.5" stroke="#c7cfdb" stroke-width=".7"/><path d="M11.5 .5v19.5" stroke="#c7cfdb" stroke-width=".7"/><path d="M17.0 .5v19.5" stroke="#c7cfdb" stroke-width=".7"/><rect x="6" y=".5" width="5" height="4.9" fill="#e8452e"/><rect x="6" y="5.4" width="9" height="4.9" fill="#4c7be0"/><rect x="6" y="10.3" width="11" height="4.9" fill="#e8452e"/><rect x="6" y="15.2" width="5" height="4.8" fill="#4c7be0"/><rect x="12.5" y="13" width="12.5" height="10" fill="#eef0f4" stroke="#7d8798" stroke-width=".8"/><text x="18.8" y="18" font-family="Liberation Sans,sans-serif" font-size="5.5" font-weight="bold" fill="#333" text-anchor="middle">&lt;a</text><text x="18.8" y="22.5" font-family="Liberation Sans,sans-serif" font-size="5.5" font-weight="bold" fill="#333" text-anchor="middle">=&gt;</text></svg>
<div class="rt" style="left:690.6px;width:200px;top:58.8px;text-align:center;font-size:9.7px;color:#15428b;letter-spacing:-0.1px;">Условное</div>
<div class="rt" style="left:749px;top:69.5px;font-size:9.7px;color:#15428b;letter-spacing:0.02px;">форматирование</div>
<svg style="left:830.0px;top:74.0px" width="5" height="3"><polygon points="0,0 5,0 2.5,3" fill="#6482ae"/></svg>
<svg style="left:860px;top:31.5px" width="27" height="24" viewBox="0 0 27 24"><rect x=".5" y=".5" width="23" height="19.5" fill="#fbfcfe" stroke="#b7c0cf" stroke-width=".8"/><rect x="6.2" y="5.4" width="17.3" height="14.6" fill="#9fb9ee"/><path d="M.5 5.4h23" stroke="#c7cfdb" stroke-width=".7"/><path d="M.5 10.3h23" stroke="#c7cfdb" stroke-width=".7"/><path d="M.5 15.2h23" stroke="#c7cfdb" stroke-width=".7"/><path d="M6.2 .5v19.5" stroke="#eef3fb" stroke-width=".8"/><path d="M12.0 .5v19.5" stroke="#eef3fb" stroke-width=".8"/><path d="M17.8 .5v19.5" stroke="#eef3fb" stroke-width=".8"/><path d="M25.5 7L17 17.5" stroke="#c9ccd2" stroke-width="2.2" stroke-linecap="round"/><path d="M17.5 16l2 1.6-2.2 2.8z" fill="#a8793a"/><path d="M16.8 18.3c-1.5.3-3 2.3-6.3 4.7 3.5.5 6.5-.5 8-3z" fill="#4c7be0"/></svg>
<div class="rt" style="left:838.4px;top:58.8px;font-size:9.7px;color:#15428b;letter-spacing:-0.01px;">Форматировать</div>
<div class="rt" style="left:770.5px;width:200px;top:69.5px;text-align:center;font-size:9.7px;color:#15428b;letter-spacing:-0.1px;">как таблицу</div>
<svg style="left:900.0px;top:74.0px" width="5" height="3"><polygon points="0,0 5,0 2.5,3" fill="#6482ae"/></svg>
<div style="left:912.5px;top:30.5px;width:279px;height:49px;background:#d6e4f5;border:1px solid #b4c9e6;"></div>
<div style="left:915.7px;top:34px;width:83px;height:19px;background:#c0c0c0;border-top:1.3px solid #222;border-bottom:1.3px solid #222;"></div>
<div style="left:918.5px;top:35.5px;font-family:'Liberation Serif',serif;font-weight:bold;font-size:12.7px;line-height:14px;color:#111;">EYHeader1</div>
<div style="left:1002px;top:32.3px;width:87.5px;height:22px;background:#fff;border:1.5px solid #f2b24a;border-radius:2px;box-shadow:0 0 1.5px #f7cf85;"></div>
<div class="rt" style="left:1007px;top:36.7px;font-size:11.3px;color:#111;">Обычный</div>
<div style="left:1092px;top:34px;width:83.6px;height:18.5px;background:#ffeb9c;"></div>
<div class="rt" style="left:1095.7px;top:36.7px;font-size:11.3px;color:#9c6500;">Нейтральный</div>
<div style="left:915.7px;top:57.6px;width:83px;height:17.8px;background:#ffc7ce;"></div>
<div class="rt" style="left:919px;top:60.3px;font-size:11.3px;color:#9c0006;">Плохой</div>
<div style="left:1003.8px;top:57.6px;width:83px;height:17.8px;background:#c6efce;"></div>
<div class="rt" style="left:1007.5px;top:60.3px;font-size:11.3px;color:#006100;">Хороший</div>
<div style="left:1092px;top:57.6px;width:83.6px;height:17.8px;background:#ffcc99;border:1px solid #7f7f7f;"></div>
<div class="rt" style="left:1096px;top:60.3px;font-size:11.3px;color:#3f3f76;">Ввод</div>
<div style="left:1179.5px;top:30.5px;width:11.5px;height:16.5px;background:linear-gradient(#f1f3f7,#e2e6ed);border:1px solid #c5cedd;border-radius:2px 2px 0 0;"></div>
<div style="left:1179.5px;top:47px;width:11.5px;height:16px;background:linear-gradient(#dfeaf8,#cbdcf2);border:1px solid #b4c9e6;"></div>
<div style="left:1179.5px;top:63px;width:11.5px;height:16.5px;background:linear-gradient(#dfeaf8,#cbdcf2);border:1px solid #b4c9e6;border-radius:0 0 2px 2px;"></div>
<svg style="left:1183px;top:37px" width="5" height="3"><polygon points="0,3 5,3 2.5,0" fill="#b9c0cc"/></svg>
<svg style="left:1182.8px;top:53.5px" width="5" height="3"><polygon points="0,0 5,0 2.5,3" fill="#6482ae"/></svg>
<div style="left:1182.8px;top:67.5px;width:5px;height:1px;background:#5a78a8;"></div>
<svg style="left:1182.8px;top:70.0px" width="5" height="3"><polygon points="0,0 5,0 2.5,3" fill="#6482ae"/></svg>
<svg style="left:1211px;top:31.5px" width="26" height="23" viewBox="0 0 26 23"><rect x=".5" y=".5" width="11.5" height="4.5" rx=".8" fill="#fdfdfe" stroke="#a7afbd" stroke-width=".8"/><path d="M6.2 .5v4.5" stroke="#a7afbd" stroke-width=".7"/><rect x=".5" y="13" width="11.5" height="9" rx=".8" fill="#fdfdfe" stroke="#a7afbd" stroke-width=".8"/><path d="M6.2 13v9M.5 17.5h11.5" stroke="#a7afbd" stroke-width=".7"/><rect x="13.5" y="6.5" width="12" height="4.8" fill="#7fa0e6" stroke="#5d7fc8" stroke-width=".7"/><path d="M17.5 6.5v4.8M21.5 6.5v4.8" stroke="#c8d6f5" stroke-width=".7"/><path d="M12 9H6M8.2 6.8L6 9l2.2 2.2" stroke="#444c5a" stroke-width="1.1" fill="none"/></svg>
<div class="rt" style="left:1205px;top:58.8px;font-size:9.7px;color:#15428b;letter-spacing:-0.26px;">Вставить</div>
<svg style="left:1222.0px;top:73.5px" width="5" height="3"><polygon points="0,0 5,0 2.5,3" fill="#6482ae"/></svg>
<svg style="left:1254.5px;top:31.5px" width="22" height="23" viewBox="0 0 22 23"><rect x=".5" y=".5" width="11.5" height="4.5" rx=".8" fill="#fdfdfe" stroke="#a7afbd" stroke-width=".8"/><path d="M6.2 .5v4.5" stroke="#a7afbd" stroke-width=".7"/><rect x=".5" y="13" width="11.5" height="9" rx=".8" fill="#fdfdfe" stroke="#a7afbd" stroke-width=".8"/><path d="M6.2 13v9M.5 17.5h11.5" stroke="#a7afbd" stroke-width=".7"/><rect x="4.5" y="6.5" width="8" height="5" fill="#e8edf6" stroke="#8da3cf" stroke-width=".6" stroke-dasharray="1 1"/><path d="M12 5.5l8 7M19.5 5l-7.5 8" stroke="#e8452e" stroke-width="1.5" stroke-linecap="round"/></svg>
<div class="rt" style="left:1247.9px;top:58.8px;font-size:9.7px;color:#15428b;letter-spacing:-0.32px;">Удалить</div>
<svg style="left:1262.8px;top:73.5px" width="5" height="3"><polygon points="0,0 5,0 2.5,3" fill="#6482ae"/></svg>
<svg style="left:1290px;top:30.5px" width="27" height="25" viewBox="0 0 27 25"><path d="M1 1.5h22" stroke="#555d6b" stroke-width="1" stroke-dasharray="1.2 1"/><path d="M8 1.5h9" stroke="#333" stroke-width="1.4"/><rect x=".5" y="4.5" width="25.5" height="17" rx="1" fill="#fafbfd" stroke="#9ea7b6" stroke-width=".8"/><path d="M.5 8h25.5M.5 18h25.5M8 4.5v17M15.5 4.5v17M21 4.5v17" stroke="#c3cad6" stroke-width=".7"/><rect x="8.3" y="8.3" width="7" height="9.4" fill="#6f94e6"/><rect x="3" y="21.5" width="11" height="2" fill="#f4f6fa" stroke="#aab2c0" stroke-width=".5"/></svg>
<div class="rt" style="left:1286.7px;top:58.8px;font-size:9.7px;color:#15428b;letter-spacing:-0.13px;">Формат</div>
<svg style="left:1301.0px;top:73.5px" width="5" height="3"><polygon points="0,0 5,0 2.5,3" fill="#6482ae"/></svg>
<div style="left:1336px;top:28.5px;font-family:'Liberation Serif',serif;font-weight:bold;font-size:13.5px;line-height:15px;color:#111;">Σ</div>
<div class="rt" style="left:1350.3px;top:30.5px;font-size:9.7px;color:#15428b;letter-spacing:-0.24px;">Автосумма</div>
<svg style="left:1401.8px;top:35.0px" width="5" height="3"><polygon points="0,0 5,0 2.5,3" fill="#6482ae"/></svg>
<svg style="left:1336px;top:48px" width="12" height="14" viewBox="0 0 12 14"><rect x=".5" y=".5" width="10.5" height="13" rx="1" fill="#f3f6fb" stroke="#5d7fc8" stroke-width=".9"/><rect x=".5" y=".5" width="10.5" height="3" fill="#3f6fd8"/><path d="M5.7 5v5M3.2 8l2.5 2.8L8.2 8" stroke="#2e62c9" stroke-width="1.6" fill="none"/></svg>
<div class="rt" style="left:1351px;top:48.7px;font-size:9.7px;color:#15428b;letter-spacing:-0.07px;">Заполнить</div>
<svg style="left:1401.3px;top:53.0px" width="5" height="3"><polygon points="0,0 5,0 2.5,3" fill="#6482ae"/></svg>
<svg style="left:1336px;top:68px" width="13" height="11" viewBox="0 0 13 11"><path d="M5.5 1.2l6.3 1.8-5.5 6.3-5.5-2z" fill="#fbfbfd" stroke="#6d7686" stroke-width=".9"/><path d="M.8 7.3l5.5 2" stroke="#6d7686" stroke-width="1.6"/><path d="M3 10.5h9" stroke="#333" stroke-width="1"/></svg>
<div class="rt" style="left:1351px;top:67.2px;font-size:9.7px;color:#15428b;letter-spacing:-0.09px;">Очистить</div>
<svg style="left:1396.2px;top:71.5px" width="5" height="3"><polygon points="0,0 5,0 2.5,3" fill="#6482ae"/></svg>
<svg style="left:1425px;top:30px" width="27" height="25" viewBox="0 0 27 25"><text x="1" y="11" font-family="Liberation Serif,serif" font-weight="bold" font-size="15" fill="#2f56b0">A</text><text x="0" y="24" font-family="Liberation Serif,serif" font-weight="bold" font-size="15" fill="#a33a30">Я</text><path d="M9.5 5.5h16.5l-6.5 7.5v9.5h-3.5v-9.5z" fill="#c4c8ce" stroke="#8d939d" stroke-width=".8"/><path d="M11 6h13.5l-5 5.5z" fill="#a5aab3"/></svg>
<div class="rt" style="left:1411.6px;top:58.8px;font-size:9.7px;color:#15428b;letter-spacing:0.08px;">Сортировка</div>
<div class="rt" style="left:1414.4px;top:69.5px;font-size:9.7px;color:#15428b;letter-spacing:-0.09px;">и фильтр</div>
<svg style="left:1458.0px;top:74.0px" width="5" height="3"><polygon points="0,0 5,0 2.5,3" fill="#6482ae"/></svg>
<svg style="left:1481px;top:31px" width="24" height="23" viewBox="0 0 24 23"><defs><linearGradient id="bn" x1="0" x2="1"><stop offset="0" stop-color="#6a82b4"/><stop offset=".35" stop-color="#d3ddf0"/><stop offset=".6" stop-color="#8ea3cc"/><stop offset="1" stop-color="#3c5690"/></linearGradient></defs><path d="M5.500 1h3.500l.7 2.500 1 3.500 .8 3v11.500h-10.500v-11.500l2.800-3.500 1-3z" fill="url(#bn)" stroke="#3f5a94" stroke-width=".8"/><path d="M15 1h3.500l.7 2.500 1.200 3 2.600 3.500v11.500h-10.500v-11.500l.8-3 1-3.500z" fill="url(#bn)" stroke="#3f5a94" stroke-width=".8"/><rect x="10.500" y="9" width="3" height="5.500" fill="#3f5a94"/><path d="M4.500 4.200h5M14.500 4.200h5M3.500 7.200h7M13.500 7.200h7" stroke="#3f5a94" stroke-width=".7" opacity=".7"/><path d="M1 19.500h10.500M12.500 19.500h10.500" stroke="#2f4a84" stroke-width="1.200" opacity=".6"/></svg>
<div class="rt" style="left:1475.7px;top:58.8px;font-size:9.7px;color:#15428b;letter-spacing:-0.04px;">Найти и</div>
<div class="rt" style="left:1470px;top:69.5px;font-size:9.7px;color:#15428b;letter-spacing:-0.24px;">выделить</div>
<svg style="left:1513.5px;top:74.0px" width="5" height="3"><polygon points="0,0 5,0 2.5,3" fill="#6482ae"/></svg>
<div style="left:0px;top:102px;width:1600px;height:17px;background:#fff;"></div>
<div style="left:0px;top:118.5px;width:1600px;height:1px;background:#8eabd6;"></div>
<div style="left:0px;top:119.5px;width:1600px;height:2.5px;background:#dce8f7;"></div>
<div style="left:0px;top:122px;width:1600px;height:1px;background:#9eb6ce;"></div>
<div style="left:0px;top:101px;width:2px;height:18px;background:#9bb8e0;"></div>
<div style="left:49.6px;top:104.9px;font-size:10.2px;line-height:12px;color:#000;">H27</div>
<svg style="left:120.5px;top:108.5px" width="7" height="4"><polygon points="0,0 7,0 3.5,4" fill="#000"/></svg>
<div style="left:132px;top:101.8px;width:70.5px;height:17px;background:linear-gradient(#f3f7fd 0%,#d3e1f4 40%,#b6cdec 60%,#a9c4e9 100%);border:1px solid #7f9dcb;border-radius:9px 0 0 9px;"></div>
<svg style="left:136.5px;top:106.5px" width="7" height="7"><defs><radialGradient id="fb" cx="40%" cy="40%" r="60%"><stop offset="0" stop-color="#eceef1"/><stop offset="1" stop-color="#a4a9b2"/></radialGradient></defs><circle cx="3.3" cy="3.3" r="3" fill="url(#fb)"/></svg>
<div style="left:187.5px;top:102.5px;font-family:'Liberation Serif',serif;font-style:italic;font-weight:bold;font-size:11.5px;line-height:14px;color:#555;letter-spacing:-0.8px;">f<span style="position:static;font-size:8px;">x</span></div>
<div style="left:209.6px;top:104.9px;font-size:10.2px;line-height:12px;color:#000;">75</div>
<div style="left:1587.5px;top:102px;width:12.5px;height:17px;background:linear-gradient(#e4eefb,#c6daf3);border:1px solid #9ab5dd;"></div>
<svg style="left:1590.5px;top:105.5px" width="7" height="10"><path d="M0.7 0.7L3.5 3.5 6.3 0.7M0.7 5L3.5 7.8 6.3 5" stroke="#1a1a1a" stroke-width="1.5" fill="none"/></svg>
</body></html>
